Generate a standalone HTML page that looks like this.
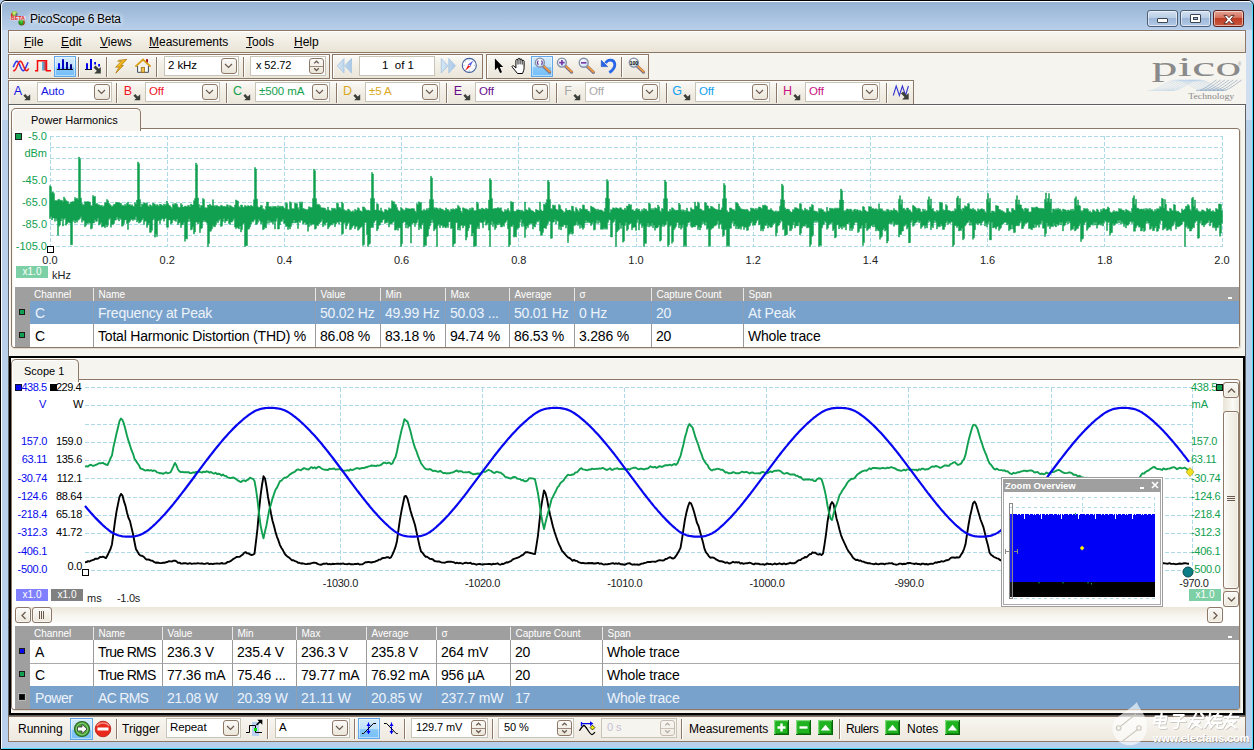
<!DOCTYPE html>
<html><head><meta charset="utf-8"><title>PicoScope 6 Beta</title>
<style>
html,body{margin:0;padding:0;}
body{width:1254px;height:750px;overflow:hidden;position:relative;background:#b9d1ea;font-family:"Liberation Sans",sans-serif;font-size:12px;}
div,span.t,svg{position:absolute;box-sizing:border-box;}
span.t{white-space:nowrap;display:block;}
u{text-decoration:underline;text-underline-offset:1px;}
.cb{background:#fff;border:1px solid #c9c4b8;}
.btn{border:1px solid #8d7767;border-radius:3px;background:linear-gradient(#fbfaf7,#ebe6da);}
.sep{width:1px;background:#8d7767;border-right:1px solid #fff;box-sizing:content-box;}
.hl{border:1px solid #62a8e8;background:linear-gradient(#d4ebfc 0%,#bfe1fb 52%,#86c8f9 56%,#76bff7 100%);box-shadow:inset 0 0 0 1px rgba(255,255,255,.45);}
</style></head><body>
<div style="left:0px;top:0px;width:1254px;height:750px;background:#b4cdea;"></div>
<div style="left:0px;top:0px;width:1254px;height:750px;background:linear-gradient(#98b4d4 2px,#a3bedc 12px,#b9d0eb 30px,#b9d0ec 100%);border:1px solid #000;border-radius:6px 6px 0 0;"></div>
<div style="left:1px;top:1px;width:1252px;height:748px;border:1px solid #fff;border-right-color:#48dcff;border-bottom-color:#48dcff;border-radius:5px 5px 0 0;"></div>
<div style="left:2px;top:30px;width:6px;height:90px;background:rgba(255,255,255,.32);"></div>
<div style="left:1246px;top:30px;width:6px;height:90px;background:rgba(255,255,255,.32);"></div>
<svg style="left:9px;top:9px" width="19" height="19" viewBox="9 9 19 19">
<defs><radialGradient id="b1" cx=".5" cy=".35" r=".7"><stop offset="0" stop-color="#e8f8a0"/><stop offset=".5" stop-color="#8ccc40"/><stop offset="1" stop-color="#c03828"/></radialGradient>
<radialGradient id="b2" cx=".45" cy=".4" r=".7"><stop offset="0" stop-color="#50d840"/><stop offset=".55" stop-color="#189818"/><stop offset="1" stop-color="#983020"/></radialGradient></defs>
<circle cx="14.400" cy="14" r="3" fill="url(#b1)"/><circle cx="16.600" cy="14.500" r="1.200" fill="#4858c0" opacity=".7"/>
<path d="M12 16.500a3 3 0 0 1 0-3" stroke="#d83020" stroke-width="1.400" fill="none"/>
<circle cx="21.600" cy="22.300" r="3.200" fill="url(#b2)"/><path d="M23 19.600a3.200 3.200 0 0 1 0 5.400z" fill="#c84820" opacity=".8"/>
<rect x="10.200" y="16" width="15.600" height="4.400" fill="#f4e4e4" opacity=".8"/>
<text x="10.800" y="20" font-size="5" font-weight="bold" fill="#e02828" font-family="Liberation Sans" textLength="14.200" lengthAdjust="spacingAndGlyphs">BETA</text>
</svg>
<span class="t" style="left:30px;top:12px;font-size:12px;line-height:14px;color:#000;letter-spacing:-.3px;text-shadow:0 0 6px #fff,0 0 4px #fff;">PicoScope 6 Beta</span>
<div style="left:1147px;top:10px;width:31px;height:17px;background:linear-gradient(#d3e1f2 0%,#b9cde6 45%,#9db7d8 50%,#b3cae6 100%);border:1px solid #4c5e75;border-radius:3px;box-shadow:inset 0 0 0 1px rgba(255,255,255,.55);"></div>
<div style="left:1180px;top:10px;width:31px;height:17px;background:linear-gradient(#d3e1f2 0%,#b9cde6 45%,#9db7d8 50%,#b3cae6 100%);border:1px solid #4c5e75;border-radius:3px;box-shadow:inset 0 0 0 1px rgba(255,255,255,.55);"></div>
<div style="left:1213px;top:10px;width:31px;height:17px;background:linear-gradient(#e6a495 0%,#d4705c 45%,#c03d26 50%,#c8583f 100%);border:1px solid #5b1f18;border-radius:3px;box-shadow:inset 0 0 0 1px rgba(255,255,255,.55);"></div>
<div style="left:1157px;top:18px;width:11px;height:5px;background:#fff;border:1px solid #3c4650;border-radius:1px;"></div>
<div style="left:1190px;top:14px;width:11px;height:9px;background:#fff;border:1px solid #3c4650;border-radius:1px;"></div>
<div style="left:1193px;top:17px;width:5px;height:3px;background:#9fb9da;border:1px solid #3c4650;"></div>
<svg style="left:1220.500px;top:13.500px" width="16" height="11" viewBox="0 0 16 12">
<path d="M2.5 1.5h3.2L8 4l2.3-2.5h3.2L9.9 6l3.6 4.5h-3.2L8 8l-2.3 2.5H2.5L6.1 6z" fill="#fff" stroke="#4a2a25" stroke-width="1"/></svg>
<div style="left:8px;top:30px;width:1238px;height:712px;background:#f6f4ef;"></div>
<div style="left:8px;top:30px;width:1238px;height:23px;background:linear-gradient(#f9f7f2,#f1ede3 50%,#e9e3d5);box-shadow:inset 1px 1px 0 #fff;border:1px solid #8d7767;"></div>
<span class="t" style="left:24px;top:35px;font-size:12px;line-height:14px;color:#000;"><u>F</u>ile</span>
<span class="t" style="left:61px;top:35px;font-size:12px;line-height:14px;color:#000;"><u>E</u>dit</span>
<span class="t" style="left:100px;top:35px;font-size:12px;line-height:14px;color:#000;"><u>V</u>iews</span>
<span class="t" style="left:149px;top:35px;font-size:12px;line-height:14px;color:#000;"><u>M</u>easurements</span>
<span class="t" style="left:246px;top:35px;font-size:12px;line-height:14px;color:#000;"><u>T</u>ools</span>
<span class="t" style="left:294px;top:35px;font-size:12px;line-height:14px;color:#000;"><u>H</u>elp</span>
<div style="left:8px;top:54px;width:322px;height:25px;background:linear-gradient(#fbfaf7,#f3f0e8 40%,#ebe6da);border:1px solid #8d7767;box-shadow:inset 1px 1px 0 #fff;"></div>
<div class="hl" style="left:54px;top:56px;width:22px;height:21px;"></div>
<svg style="left:0;top:50px" width="170" height="30" viewBox="0 50 170 30">
<defs><linearGradient id="sq"><stop offset="0" stop-color="#48c8fa"/><stop offset="1" stop-color="#f01818"/></linearGradient>
<linearGradient id="bar"><stop offset="0" stop-color="#0000f0"/><stop offset="1" stop-color="#000078"/></linearGradient>
<linearGradient id="bolt" x1="0" y1="0" x2="1" y2="1"><stop offset="0" stop-color="#fff0a0"/><stop offset=".4" stop-color="#f2b818"/><stop offset="1" stop-color="#b87808"/></linearGradient></defs>
<path d="M13.2 67.2 13.7 66.1 14.2 64.9 14.7 63.8 15.2 62.8 15.7 62.1 16.2 61.5 16.7 61.3 17.2 61.3 17.7 61.6 18.2 62.2 18.7 63.0 19.2 64.0 19.7 65.1 20.2 66.3 20.7 67.4 21.2 68.5 21.7 69.4 22.2 70.1 22.7 70.6 23.2 70.7 23.7 70.6 24.2 70.2 24.7 69.6 25.2 68.7 25.7 67.7 26.2 66.5 26.7 65.4 27.2 64.2 27.7 63.2 28.2 62.3" fill="none" stroke="#2a38f0" stroke-width="1.500"/>
<path d="M13.2 70.4 13.7 70.7 14.2 70.7 14.7 70.4 15.2 69.9 15.7 69.1 16.2 68.1 16.7 67.0 17.2 65.8 17.7 64.7 18.2 63.6 18.7 62.7 19.2 61.9 19.7 61.5 20.2 61.3 20.7 61.3 21.2 61.7 21.7 62.3 22.2 63.2 22.7 64.2 23.2 65.4 23.7 66.5 24.2 67.7 24.7 68.7 25.2 69.6 25.7 70.2 26.2 70.6 26.7 70.7 27.2 70.6 27.7 70.1 28.2 69.4 28.7 68.5" fill="none" stroke="#f01818" stroke-width="1.500"/>
<rect x="42" y="61.500" width="4.500" height="9" fill="url(#sq)"/>
<path d="M35 70.700H37.500V60.700H46.500V70.700H51" fill="none" stroke="#f40808" stroke-width="1.500"/>
<path d="M58 69V63.200h2V69zM62 69V59.200h2V69zM66 69V62h2V69zM70 69V64.200h2V69z" fill="url(#bar)"/>
<path d="M57 69.500H73" stroke="#101010" stroke-width="1"/>
<path d="M86 69V63.300h2V69zM90 69V59.100h2V69zM94.200 64.500V62h1.800v2.500zM98.200 66.400V64h1.800v2.400z" fill="#0000f0"/>
<path d="M85 69.500H92" stroke="#101030" stroke-width="1"/>
<path d="M94.500 66.500l4 4" stroke="#3a3f3a" stroke-width="3"/><path d="M100.800 67v6.600h-6.600z" fill="#3a3f3a"/>
<path d="M118.500 60.300l8.300-.9-6 6.300 2.600-.3-7.600 7.800 3.400-6.300-3.600.4 5.800-6.300-3.600.4z" fill="url(#bolt)" stroke="#a87008" stroke-width=".7"/>
<rect x="146" y="59.200" width="2" height="3.600" fill="#a01020"/>
<path d="M137.600 66v6.300h10.800V66" fill="#f8fcfc" stroke="#3c4858" stroke-width="1"/>
<path d="M135.400 66.600L143 59.600l7.600 7" fill="none" stroke="#d8a018" stroke-width="1.900"/>
<rect x="141.200" y="67.300" width="3.300" height="5" fill="#f0c050" stroke="#9a6c10" stroke-width=".8"/>
</svg>
<div class="sep" style="left:78px;top:57px;width:1px;height:20px;"></div>
<div class="sep" style="left:106px;top:57px;width:1px;height:20px;"></div>
<div class="sep" style="left:156px;top:57px;width:1px;height:20px;"></div>
<div class="cb" style="left:164px;top:56px;width:75px;height:20px;"></div>
<span class="t" style="left:168px;top:59.25px;font-size:11.5px;line-height:13.5px;color:#000;letter-spacing:-.1px;">2 kHz</span>
<div class="btn" style="left:221px;top:58px;width:16px;height:16px;"><svg style="left:2px;top:4px" width="9" height="6" viewBox="0 0 9 6"><path d="M1 1l3.5 3.5L8 1" fill="none" stroke="#6a594e" stroke-width="1.15"/></svg></div>
<div class="sep" style="left:243px;top:57px;width:1px;height:20px;"></div>
<div class="cb" style="left:250px;top:56px;width:76px;height:20px;"></div>
<span class="t" style="left:256px;top:59.3px;font-size:11px;line-height:13px;color:#000;letter-spacing:-.1px;">x 52.72</span>
<div class="btn" style="left:309px;top:58px;width:15px;height:16px;"><svg style="left:3px;top:0px" width="7" height="14" viewBox="0 0 7 14"><path d="M1.200 4.400L3.500 2.200 5.800 4.400M1.200 9.300L3.500 11.500 5.800 9.300" fill="none" stroke="#6a594e" stroke-width="1.300"/></svg><div style="left:0;top:7px;width:13px;height:1px;background:#9d8a7c"></div></div>
<div style="left:332px;top:54px;width:151px;height:25px;background:linear-gradient(#fbfaf7,#f3f0e8 40%,#ebe6da);border:1px solid #8d7767;box-shadow:inset 1px 1px 0 #fff;"></div>
<svg style="left:332px;top:54px" width="152" height="25" viewBox="332 54 152 25">
<defs><linearGradient id="nv" x1="0" y1="0" x2="1" y2="0"><stop offset="0" stop-color="#d4e6f2"/><stop offset="1" stop-color="#a8c8e6"/></linearGradient></defs>
<path d="M344 58.500v14.500L337.300 65.800zM351.500 58.500v14.500L344.800 65.800z" fill="url(#nv)" stroke="#a4c4e2" stroke-width=".8"/>
<path d="M441.300 58.500v14.500L448 65.800zM448.800 58.500v14.500L455.500 65.800z" fill="url(#nv)" stroke="#a4c4e2" stroke-width=".8"/>
<circle cx="469.300" cy="65.400" r="7" fill="#fdfeff" stroke="#3f5f9c" stroke-width="1.100"/>
<path d="M469.300 59.500v1.300M469.300 70v1.300M463.400 65.400h1.300M473.900 65.400h1.300M465.200 61.300l.8.800M473.400 61.300l-.8.800M465.200 69.500l.8-.8M473.400 69.500l-.8-.8" stroke="#9aa8c0" stroke-width=".7"/>
<path d="M473.300 60.500L468 64.600l2.200 1.800z" fill="#5a5ae8"/><path d="M465.200 70.800L470.700 66.300l-2.300-1.800z" fill="#f01818"/>
<circle cx="469.300" cy="65.500" r=".8" fill="#fff"/>
</svg>
<div class="cb" style="left:359px;top:56px;width:76px;height:20px;"></div>
<span class="t" style="left:382px;top:59.3px;font-size:11.5px;line-height:13.5px;color:#000;">1&nbsp;&nbsp;of 1</span>
<div style="left:486px;top:54px;width:163px;height:25px;background:linear-gradient(#fbfaf7,#f3f0e8 40%,#ebe6da);border:1px solid #8d7767;box-shadow:inset 1px 1px 0 #fff;"></div>
<div class="hl" style="left:531px;top:56px;width:22px;height:21px;"></div>
<svg style="left:486px;top:50px" width="170" height="30" viewBox="486 50 170 30">
<defs><radialGradient id="gl" cx=".4" cy=".35" r=".7"><stop offset="0" stop-color="#ffffff"/><stop offset="1" stop-color="#c4e0f4"/></radialGradient></defs>
<path d="M494.900 58.500V70.200L497.600 67.600 500 73 502 72.200 499.800 67H503.200Z" fill="#000" stroke="#fff" stroke-width=".6" paint-order="stroke"/>
<path d="M517.500 73.500c-1.500-2-3.500-4.300-5.200-6.200-.8-1 .5-2.200 1.600-1.200l2 1.900V60.500c0-1.400 2-1.400 2 0V59.400c0-1.500 2.100-1.500 2.100 0v.6c0-1.400 2.100-1.400 2.100 0v1.300c0-1.300 2-1.300 2 0v6.200c0 2.500-.8 4-1.600 6z" fill="#fff" stroke="#000" stroke-width="1"/>
<path d="M518 60.500v4M520.100 60v4.300M522.200 61.300v3.300" stroke="#000" stroke-width=".9"/>
<path d="M543.3 66.2l6.300 5.900" stroke="#78708c" stroke-width="3.200" stroke-linecap="round"/><path d="M544.1 66.4l5.600 5.200" stroke="#f49a38" stroke-width="1.800" stroke-linecap="round"/><circle cx="539.9" cy="62.6" r="4.500" fill="url(#gl)" stroke="#8890a6" stroke-width="1.400"/><path d="M538.300 60.500c-1 1.300-1 3 0 4.300M541.500 60.500c1 1.300 1 3 0 4.300" stroke="#6a3a9a" stroke-width="1.100" fill="none"/><path d="M565.3 66.2l6.300 5.900" stroke="#78708c" stroke-width="3.200" stroke-linecap="round"/><path d="M566.1 66.4l5.600 5.200" stroke="#f49a38" stroke-width="1.800" stroke-linecap="round"/><circle cx="561.9" cy="62.6" r="4.500" fill="url(#gl)" stroke="#8890a6" stroke-width="1.400"/><path d="M559.200 62.600h5.400M561.900 59.900v5.400" stroke="#7838a8" stroke-width="1.700"/><path d="M587.1 66.39999999999999l6.300 5.900" stroke="#78708c" stroke-width="3.200" stroke-linecap="round"/><path d="M587.9000000000001 66.6l5.600 5.200" stroke="#f49a38" stroke-width="1.800" stroke-linecap="round"/><circle cx="583.7" cy="62.8" r="4.500" fill="url(#gl)" stroke="#8890a6" stroke-width="1.400"/><path d="M581 62.800h5.400" stroke="#7838a8" stroke-width="1.700"/><path d="M637.1999999999999 66.2l6.300 5.900" stroke="#78708c" stroke-width="3.200" stroke-linecap="round"/><path d="M638.0 66.4l5.600 5.200" stroke="#f49a38" stroke-width="1.800" stroke-linecap="round"/><circle cx="633.8" cy="62.6" r="4.500" fill="url(#gl)" stroke="#8890a6" stroke-width="1.400"/><text x="629.700" y="65" font-size="6" font-weight="bold" font-family="Liberation Sans" fill="#000" textLength="8.400" lengthAdjust="spacingAndGlyphs">100</text>
<path d="M601.300 60.300v6.300h6.300z" fill="#2868e8" stroke="#1848c0" stroke-width=".6"/>
<path d="M605.500 63.200C608 58.500 614.600 59.300 614.800 64.500 614.900 68 612.500 70.500 609.300 72.500" fill="none" stroke="#2868e8" stroke-width="2.800" stroke-linecap="butt"/>
</svg>
<div class="sep" style="left:621px;top:57px;width:1px;height:20px;"></div>
<div style="left:8px;top:80px;width:906px;height:25px;background:linear-gradient(#fbfaf7,#f3f0e8 40%,#ebe6da);border:1px solid #8d7767;box-shadow:inset 1px 1px 0 #fff;"></div>
<span class="t" style="left:-18px;top:84px;font-size:12.5px;line-height:14.5px;color:#1414e6;width:40px;text-align:right;">A</span>
<svg style="left:23px;top:93px" width="8" height="8" viewBox="0 0 8 8"><path d="M1.300 1.800l3.500 3.500" stroke="#3a3f3a" stroke-width="2.600"/><path d="M7.200 1.200v6h-6z" fill="#3a3f3a"/></svg>
<div class="cb" style="left:37px;top:82px;width:75px;height:20px;"></div>
<span class="t" style="left:41px;top:85.25px;font-size:11.5px;line-height:13.5px;color:#1414e6;letter-spacing:-.1px;">Auto</span>
<div class="btn" style="left:94px;top:84px;width:16px;height:16px;"><svg style="left:2px;top:4px" width="9" height="6" viewBox="0 0 9 6"><path d="M1 1l3.5 3.5L8 1" fill="none" stroke="#6a594e" stroke-width="1.15"/></svg></div>
<div class="sep" style="left:116px;top:83px;width:1px;height:20px;"></div>
<span class="t" style="left:92px;top:84px;font-size:12.5px;line-height:14.5px;color:#f01428;width:40px;text-align:right;">B</span>
<svg style="left:133px;top:93px" width="8" height="8" viewBox="0 0 8 8"><path d="M1.300 1.800l3.500 3.500" stroke="#3a3f3a" stroke-width="2.600"/><path d="M7.200 1.200v6h-6z" fill="#3a3f3a"/></svg>
<div class="cb" style="left:145px;top:82px;width:75px;height:20px;"></div>
<span class="t" style="left:149px;top:85.25px;font-size:11.5px;line-height:13.5px;color:#f01428;letter-spacing:-.1px;">Off</span>
<div class="btn" style="left:202px;top:84px;width:16px;height:16px;"><svg style="left:2px;top:4px" width="9" height="6" viewBox="0 0 9 6"><path d="M1 1l3.5 3.5L8 1" fill="none" stroke="#6a594e" stroke-width="1.15"/></svg></div>
<div class="sep" style="left:226px;top:83px;width:1px;height:20px;"></div>
<span class="t" style="left:202px;top:84px;font-size:12.5px;line-height:14.5px;color:#14a050;width:40px;text-align:right;">C</span>
<svg style="left:243px;top:93px" width="8" height="8" viewBox="0 0 8 8"><path d="M1.300 1.800l3.500 3.500" stroke="#3a3f3a" stroke-width="2.600"/><path d="M7.200 1.200v6h-6z" fill="#3a3f3a"/></svg>
<div class="cb" style="left:255px;top:82px;width:75px;height:20px;"></div>
<span class="t" style="left:259px;top:85.25px;font-size:11.5px;line-height:13.5px;color:#14a050;letter-spacing:-.1px;">&#177;500 mA</span>
<div class="btn" style="left:312px;top:84px;width:16px;height:16px;"><svg style="left:2px;top:4px" width="9" height="6" viewBox="0 0 9 6"><path d="M1 1l3.5 3.5L8 1" fill="none" stroke="#6a594e" stroke-width="1.15"/></svg></div>
<div class="sep" style="left:336px;top:83px;width:1px;height:20px;"></div>
<span class="t" style="left:312px;top:84px;font-size:12.5px;line-height:14.5px;color:#d8a81e;width:40px;text-align:right;">D</span>
<svg style="left:353px;top:93px" width="8" height="8" viewBox="0 0 8 8"><path d="M1.300 1.800l3.500 3.500" stroke="#3a3f3a" stroke-width="2.600"/><path d="M7.200 1.200v6h-6z" fill="#3a3f3a"/></svg>
<div class="cb" style="left:365px;top:82px;width:75px;height:20px;"></div>
<span class="t" style="left:369px;top:85.25px;font-size:11.5px;line-height:13.5px;color:#d8a81e;letter-spacing:-.1px;">&#177;5 A</span>
<div class="btn" style="left:422px;top:84px;width:16px;height:16px;"><svg style="left:2px;top:4px" width="9" height="6" viewBox="0 0 9 6"><path d="M1 1l3.5 3.5L8 1" fill="none" stroke="#6a594e" stroke-width="1.15"/></svg></div>
<div class="sep" style="left:446px;top:83px;width:1px;height:20px;"></div>
<span class="t" style="left:422px;top:84px;font-size:12.5px;line-height:14.5px;color:#6a0e8c;width:40px;text-align:right;">E</span>
<svg style="left:463px;top:93px" width="8" height="8" viewBox="0 0 8 8"><path d="M1.300 1.800l3.500 3.500" stroke="#3a3f3a" stroke-width="2.600"/><path d="M7.200 1.200v6h-6z" fill="#3a3f3a"/></svg>
<div class="cb" style="left:475px;top:82px;width:75px;height:20px;"></div>
<span class="t" style="left:479px;top:85.25px;font-size:11.5px;line-height:13.5px;color:#6a0e8c;letter-spacing:-.1px;">Off</span>
<div class="btn" style="left:532px;top:84px;width:16px;height:16px;"><svg style="left:2px;top:4px" width="9" height="6" viewBox="0 0 9 6"><path d="M1 1l3.5 3.5L8 1" fill="none" stroke="#6a594e" stroke-width="1.15"/></svg></div>
<div class="sep" style="left:556px;top:83px;width:1px;height:20px;"></div>
<span class="t" style="left:532px;top:84px;font-size:12.5px;line-height:14.5px;color:#a8a8a8;width:40px;text-align:right;">F</span>
<svg style="left:573px;top:93px" width="8" height="8" viewBox="0 0 8 8"><path d="M1.300 1.800l3.500 3.500" stroke="#3a3f3a" stroke-width="2.600"/><path d="M7.200 1.200v6h-6z" fill="#3a3f3a"/></svg>
<div class="cb" style="left:585px;top:82px;width:75px;height:20px;"></div>
<span class="t" style="left:589px;top:85.25px;font-size:11.5px;line-height:13.5px;color:#a8a8a8;letter-spacing:-.1px;">Off</span>
<div class="btn" style="left:642px;top:84px;width:16px;height:16px;"><svg style="left:2px;top:4px" width="9" height="6" viewBox="0 0 9 6"><path d="M1 1l3.5 3.5L8 1" fill="none" stroke="#6a594e" stroke-width="1.15"/></svg></div>
<div class="sep" style="left:666px;top:83px;width:1px;height:20px;"></div>
<span class="t" style="left:642px;top:84px;font-size:12.5px;line-height:14.5px;color:#14a0f0;width:40px;text-align:right;">G</span>
<svg style="left:683px;top:93px" width="8" height="8" viewBox="0 0 8 8"><path d="M1.300 1.800l3.500 3.500" stroke="#3a3f3a" stroke-width="2.600"/><path d="M7.200 1.200v6h-6z" fill="#3a3f3a"/></svg>
<div class="cb" style="left:695px;top:82px;width:75px;height:20px;"></div>
<span class="t" style="left:699px;top:85.25px;font-size:11.5px;line-height:13.5px;color:#14a0f0;letter-spacing:-.1px;">Off</span>
<div class="btn" style="left:752px;top:84px;width:16px;height:16px;"><svg style="left:2px;top:4px" width="9" height="6" viewBox="0 0 9 6"><path d="M1 1l3.5 3.5L8 1" fill="none" stroke="#6a594e" stroke-width="1.15"/></svg></div>
<div class="sep" style="left:776px;top:83px;width:1px;height:20px;"></div>
<span class="t" style="left:752px;top:84px;font-size:12.5px;line-height:14.5px;color:#c8147e;width:40px;text-align:right;">H</span>
<svg style="left:793px;top:93px" width="8" height="8" viewBox="0 0 8 8"><path d="M1.300 1.800l3.500 3.500" stroke="#3a3f3a" stroke-width="2.600"/><path d="M7.200 1.200v6h-6z" fill="#3a3f3a"/></svg>
<div class="cb" style="left:805px;top:82px;width:75px;height:20px;"></div>
<span class="t" style="left:809px;top:85.25px;font-size:11.5px;line-height:13.5px;color:#c8147e;letter-spacing:-.1px;">Off</span>
<div class="btn" style="left:862px;top:84px;width:16px;height:16px;"><svg style="left:2px;top:4px" width="9" height="6" viewBox="0 0 9 6"><path d="M1 1l3.5 3.5L8 1" fill="none" stroke="#6a594e" stroke-width="1.15"/></svg></div>
<div class="sep" style="left:886px;top:83px;width:1px;height:20px;"></div>
<svg style="left:890px;top:82px" width="24" height="22" viewBox="890 82 24 22">
<path d="M893.300 95.500L896.200 86l3.200 9.500 3-9.500 3.200 9.500 2.800-9.500" fill="none" stroke="#3434d0" stroke-width="1.100"/>
<path d="M902 92.500l4 4" stroke="#3a3f3a" stroke-width="2.800"/><path d="M908.700 93v6.600h-6.600z" fill="#3a3f3a"/></svg>
<svg style="left:1140px;top:52px" width="106" height="52" viewBox="1140 52 106 52">
<text x="1151.400" y="76.100" font-family="Liberation Serif" font-size="27.500" fill="#8a8a8a" textLength="90" lengthAdjust="spacingAndGlyphs">pico</text>
<text x="1238" y="66" font-family="Liberation Sans" font-size="4.500" fill="#9a9a9a">&#174;</text>
<g fill="none" stroke-width=".55"><path d="M1148.0 90.600C1160.0 90.600 1165.0 80 1176.0 80S1192.0 90.600 1204.0 90.600" stroke="#a9c9e6" opacity="0.55"/><path d="M1151.3 90.600C1163.3 90.600 1168.3 80 1179.3 80S1195.3 90.600 1207.3 90.600" stroke="#a9c9e6" opacity="0.60"/><path d="M1154.6 90.600C1166.6 90.600 1171.6 80 1182.6 80S1198.6 90.600 1210.6 90.600" stroke="#a9c9e6" opacity="0.65"/><path d="M1157.9 90.600C1169.9 90.600 1174.9 80 1185.9 80S1201.9 90.600 1213.9 90.600" stroke="#a9c9e6" opacity="0.70"/><path d="M1161.2 90.600C1173.2 90.600 1178.2 80 1189.2 80S1205.2 90.600 1217.2 90.600" stroke="#a9c9e6" opacity="0.75"/><path d="M1164.5 90.600C1176.5 90.600 1181.5 80 1192.5 80S1208.5 90.600 1220.5 90.600" stroke="#a9c9e6" opacity="0.80"/><path d="M1167.8 90.600C1179.8 90.600 1184.8 80 1195.8 80S1211.8 90.600 1223.8 90.600" stroke="#a9c9e6" opacity="0.85"/><path d="M1171.1 90.600C1183.1 90.600 1188.1 80 1199.1 80S1215.1 90.600 1227.1 90.600" stroke="#a9c9e6" opacity="0.90"/><path d="M1196.0 90.600C1204.0 90.600 1210.0 84 1216.5 80" stroke="#5f7fa2" opacity=".85"/><path d="M1200.2 90.600C1208.2 90.600 1214.2 84 1220.7 80" stroke="#5f7fa2" opacity=".85"/><path d="M1204.4 90.600C1212.4 90.600 1218.4 84 1224.9 80" stroke="#5f7fa2" opacity=".85"/><path d="M1208.6 90.600C1216.6 90.600 1222.6 84 1229.1 80" stroke="#5f7fa2" opacity=".85"/><path d="M1212.8 90.600C1220.8 90.600 1226.8 84 1233.3 80" stroke="#5f7fa2" opacity=".85"/><path d="M1217.0 90.600C1225.0 90.600 1231.0 84 1237.5 80" stroke="#5f7fa2" opacity=".85"/><path d="M1221.2 90.600C1229.2 90.600 1235.2 84 1241.7 80" stroke="#5f7fa2" opacity=".85"/></g>
<text x="1188.200" y="98.500" font-family="Liberation Serif" font-size="8" fill="#8a8a8a" textLength="46" lengthAdjust="spacingAndGlyphs">Technology</text>
</svg>
<div style="left:8px;top:104px;width:1238px;height:612px;border:1px solid #5f5f5f;box-shadow:inset 1px 1px 0 #fff;"></div>
<div style="left:11px;top:128px;width:1229px;height:220px;background:#fff;border:1px solid #8d7767;border-radius:0 3px 3px 3px;box-shadow:1px 1px 0 #dedbd0,inset 2px 0 1px -1px #f6f4ef;"></div>
<div style="left:11px;top:108px;width:130px;height:23px;background:#f6f4ef;border:1px solid #8d7767;border-bottom:none;border-radius:5px 5px 0 0;box-shadow:inset 1px 1px 0 #fff;"></div>
<span class="t" style="left:31px;top:113.5px;font-size:11px;line-height:13px;color:#000;">Power Harmonics</span>
<svg style="left:0;top:0" width="1254" height="290" viewBox="0 0 1254 290">
<path d="M50 136.0H1222M50 147.1H1222M50 158.1H1222M50 169.2H1222M50 180.2H1222M50 191.2H1222M50 202.3H1222M50 213.3H1222M50 224.4H1222M50 235.4H1222M50 246.5H1222M50.0 136V246.5M167.2 136V246.5M284.4 136V246.5M401.6 136V246.5M518.8 136V246.5M636.0 136V246.5M753.2 136V246.5M870.4 136V246.5M987.6 136V246.5M1104.8 136V246.5M1222.0 136V246.5" fill="none" stroke="#aed9e8" stroke-width="1" stroke-dasharray="4 2" shape-rendering="crispEdges"/>
<path d="M49.5 185.7H50.5L50.5 186.8H51.5L51.5 192.4H52.5L52.5 192.0H53.5L53.5 193.5H54.5L54.5 200.4H55.5L55.5 200.5H56.5L56.5 200.9H57.5L57.5 199.7H58.5L58.5 199.2H59.5L59.5 200.3H60.5L60.5 200.2H61.5L61.5 200.5H62.5L62.5 201.4H63.5L63.5 197.1H64.5L64.5 198.7H65.5L65.5 200.6H66.5L66.5 201.2H67.5L67.5 201.5H68.5L68.5 204.1H69.5L69.5 203.7H70.5L70.5 201.9H71.5L71.5 202.1H72.5L72.5 201.4H73.5L73.5 201.6H74.5L74.5 197.5H75.5L75.5 199.1H76.5L76.5 198.1H77.5L77.5 199.5H78.5L78.5 157.0H79.5L79.5 158.7H80.5L80.5 198.1H81.5L81.5 203.6H82.5L82.5 205.2H83.5L83.5 204.5H84.5L84.5 201.6H85.5L85.5 201.9H86.5L86.5 201.7H87.5L87.5 201.5H88.5L88.5 201.9H89.5L89.5 202.1H90.5L90.5 205.4H91.5L91.5 206.0H92.5L92.5 195.5H93.5L93.5 196.4H94.5L94.5 196.4H95.5L95.5 204.1H96.5L96.5 203.4H97.5L97.5 204.7H98.5L98.5 204.7H99.5L99.5 205.5H100.5L100.5 205.6H101.5L101.5 205.4H102.5L102.5 207.0H103.5L103.5 205.8H104.5L104.5 202.8H105.5L105.5 202.8H106.5L106.5 199.5H107.5L107.5 200.7H108.5L108.5 203.3H109.5L109.5 204.5H110.5L110.5 205.6H111.5L111.5 207.1H112.5L112.5 205.8H113.5L113.5 204.3H114.5L114.5 204.3H115.5L115.5 202.3H116.5L116.5 202.6H117.5L117.5 202.4H118.5L118.5 202.8H119.5L119.5 203.0H120.5L120.5 203.4H121.5L121.5 205.2H122.5L122.5 205.4H123.5L123.5 206.0H124.5L124.5 204.3H125.5L125.5 205.4H126.5L126.5 203.2H127.5L127.5 202.2H128.5L128.5 205.1H129.5L129.5 204.4H130.5L130.5 205.8H131.5L131.5 204.8H132.5L132.5 206.0H133.5L133.5 206.7H134.5L134.5 202.7H135.5L135.5 204.0H136.5L136.5 200.1H137.5L137.5 162.0H138.5L138.5 163.6H139.5L139.5 199.5H140.5L140.5 207.0H141.5L141.5 203.9H142.5L142.5 204.5H143.5L143.5 202.7H144.5L144.5 202.9H145.5L145.5 204.1H146.5L146.5 202.9H147.5L147.5 205.8H148.5L148.5 206.5H149.5L149.5 204.7H150.5L150.5 205.4H151.5L151.5 206.3H152.5L152.5 203.1H153.5L153.5 203.8H154.5L154.5 204.2H155.5L155.5 205.8H156.5L156.5 204.6H157.5L157.5 205.2H158.5L158.5 206.3H159.5L159.5 204.1H160.5L160.5 204.6H161.5L161.5 205.3H162.5L162.5 206.0H163.5L163.5 204.0H164.5L164.5 205.5H165.5L165.5 204.2H166.5L166.5 201.1H167.5L167.5 203.4H168.5L168.5 205.3H169.5L169.5 205.7H170.5L170.5 207.0H171.5L171.5 208.6H172.5L172.5 203.8H173.5L173.5 204.9H174.5L174.5 203.6H175.5L175.5 203.5H176.5L176.5 204.3H177.5L177.5 206.8H178.5L178.5 208.0H179.5L179.5 207.3H180.5L180.5 203.6H181.5L181.5 204.8H182.5L182.5 207.0H183.5L183.5 207.0H184.5L184.5 206.0H185.5L185.5 206.2H186.5L186.5 206.9H187.5L187.5 205.4H188.5L188.5 205.5H189.5L189.5 206.9H190.5L190.5 203.9H191.5L191.5 205.1H192.5L192.5 205.1H193.5L193.5 200.7H194.5L194.5 198.5H195.5L195.5 163.1H196.5L196.5 164.7H197.5L197.5 197.9H198.5L198.5 204.5H199.5L199.5 207.8H200.5L200.5 205.4H201.5L201.5 205.8H202.5L202.5 198.5H203.5L203.5 199.5H204.5L204.5 207.4H205.5L205.5 208.2H206.5L206.5 207.7H207.5L207.5 205.1H208.5L208.5 205.3H209.5L209.5 204.2H210.5L210.5 205.6H211.5L211.5 205.7H212.5L212.5 199.7H213.5L213.5 205.6H214.5L214.5 206.3H215.5L215.5 205.5H216.5L216.5 205.6H217.5L217.5 206.2H218.5L218.5 206.6H219.5L219.5 206.8H220.5L220.5 205.2H221.5L221.5 205.8H222.5L222.5 206.3H223.5L223.5 206.6H224.5L224.5 206.3H225.5L225.5 207.0H226.5L226.5 204.7H227.5L227.5 205.2H228.5L228.5 207.3H229.5L229.5 205.3H230.5L230.5 205.9H231.5L231.5 206.8H232.5L232.5 207.2H233.5L233.5 207.5H234.5L234.5 205.0H235.5L235.5 199.9H236.5L236.5 200.7H237.5L237.5 201.2H238.5L238.5 206.5H239.5L239.5 207.6H240.5L240.5 205.0H241.5L241.5 205.1H242.5L242.5 207.0H243.5L243.5 207.2H244.5L244.5 205.4H245.5L245.5 205.9H246.5L246.5 206.8H247.5L247.5 205.6H248.5L248.5 206.1H249.5L249.5 206.4H250.5L250.5 205.2H251.5L251.5 206.1H252.5L252.5 206.4H253.5L253.5 199.7H254.5L254.5 167.5H255.5L255.5 169.2H256.5L256.5 199.1H257.5L257.5 206.8H258.5L258.5 207.9H259.5L259.5 207.0H260.5L260.5 205.3H261.5L261.5 205.7H262.5L262.5 208.7H263.5L263.5 209.2H264.5L264.5 210.2H265.5L265.5 206.3H266.5L266.5 202.0H267.5L267.5 202.2H268.5L268.5 206.6H269.5L269.5 206.7H270.5L270.5 206.6H271.5L271.5 208.1H272.5L272.5 206.2H273.5L273.5 207.0H274.5L274.5 206.3H275.5L275.5 206.6H276.5L276.5 207.7H277.5L277.5 205.7H278.5L278.5 207.3H279.5L279.5 206.0H280.5L280.5 207.3H281.5L281.5 206.1H282.5L282.5 206.6H283.5L283.5 207.8H284.5L284.5 209.1H285.5L285.5 202.7H286.5L286.5 203.6H287.5L287.5 209.2H288.5L288.5 210.0H289.5L289.5 201.8H290.5L290.5 202.7H291.5L291.5 208.8H292.5L292.5 208.6H293.5L293.5 208.9H294.5L294.5 202.8H295.5L295.5 203.9H296.5L296.5 203.5H297.5L297.5 207.6H298.5L298.5 209.4H299.5L299.5 201.9H300.5L300.5 203.2H301.5L301.5 201.9H302.5L302.5 208.3H303.5L303.5 208.7H304.5L304.5 209.3H305.5L305.5 209.3H306.5L306.5 210.3H307.5L307.5 209.2H308.5L308.5 206.7H309.5L309.5 207.2H310.5L310.5 207.8H311.5L311.5 207.3H312.5L312.5 198.6H313.5L313.5 169.2H314.5L314.5 170.8H315.5L315.5 198.6H316.5L316.5 204.4H317.5L317.5 204.3H318.5L318.5 204.5H319.5L319.5 205.6H320.5L320.5 207.5H321.5L321.5 208.0H322.5L322.5 207.8H323.5L323.5 208.1H324.5L324.5 208.2H325.5L325.5 209.8H326.5L326.5 210.6H327.5L327.5 207.1H328.5L328.5 209.9H329.5L329.5 210.6H330.5L330.5 211.3H331.5L331.5 208.1H332.5L332.5 208.9H333.5L333.5 208.2H334.5L334.5 208.4H335.5L335.5 209.8H336.5L336.5 202.8H337.5L337.5 203.6H338.5L338.5 207.3H339.5L339.5 207.5H340.5L340.5 208.8H341.5L341.5 202.0H342.5L342.5 203.5H343.5L343.5 209.5H344.5L344.5 210.5H345.5L345.5 210.5H346.5L346.5 211.3H347.5L347.5 209.1H348.5L348.5 209.4H349.5L349.5 210.7H350.5L350.5 212.0H351.5L351.5 211.6H352.5L352.5 210.8H353.5L353.5 212.3H354.5L354.5 209.3H355.5L355.5 210.9H356.5L356.5 209.9H357.5L357.5 207.7H358.5L358.5 208.6H359.5L359.5 210.7H360.5L360.5 211.0H361.5L361.5 211.7H362.5L362.5 206.9H363.5L363.5 207.0H364.5L364.5 208.4H365.5L365.5 209.8H366.5L366.5 210.7H367.5L367.5 210.0H368.5L368.5 210.6H369.5L369.5 210.7H370.5L370.5 198.4H371.5L371.5 172.5H372.5L372.5 174.1H373.5L373.5 198.4H374.5L374.5 210.0H375.5L375.5 210.0H376.5L376.5 203.6H377.5L377.5 204.4H378.5L378.5 210.3H379.5L379.5 211.0H380.5L380.5 207.9H381.5L381.5 210.8H382.5L382.5 211.9H383.5L383.5 212.3H384.5L384.5 209.4H385.5L385.5 209.4H386.5L386.5 210.3H387.5L387.5 210.6H388.5L388.5 207.8H389.5L389.5 208.9H390.5L390.5 208.6H391.5L391.5 200.8H392.5L392.5 202.1H393.5L393.5 201.7H394.5L394.5 204.3H395.5L395.5 204.6H396.5L396.5 207.5H397.5L397.5 209.9H398.5L398.5 211.0H399.5L399.5 211.2H400.5L400.5 207.4H401.5L401.5 208.5H402.5L402.5 209.4H403.5L403.5 210.4H404.5L404.5 209.9H405.5L405.5 207.9H406.5L406.5 208.4H407.5L407.5 208.7H408.5L408.5 208.8H409.5L409.5 208.9H410.5L410.5 209.0H411.5L411.5 208.5H412.5L412.5 208.6H413.5L413.5 208.8H414.5L414.5 210.9H415.5L415.5 212.2H416.5L416.5 203.6H417.5L417.5 204.7H418.5L418.5 201.8H419.5L419.5 202.5H420.5L420.5 202.4H421.5L421.5 210.6H422.5L422.5 211.0H423.5L423.5 209.2H424.5L424.5 210.7H425.5L425.5 210.1H426.5L426.5 208.6H427.5L427.5 210.0H428.5L428.5 208.0H429.5L429.5 199.5H430.5L430.5 176.3H431.5L431.5 178.0H432.5L432.5 199.5H433.5L433.5 207.5H434.5L434.5 208.7H435.5L435.5 207.8H436.5L436.5 208.0H437.5L437.5 208.8H438.5L438.5 209.8H439.5L439.5 207.9H440.5L440.5 209.0H441.5L441.5 209.0H442.5L442.5 209.7H443.5L443.5 210.5H444.5L444.5 210.8H445.5L445.5 207.9H446.5L446.5 209.3H447.5L447.5 209.4H448.5L448.5 210.6H449.5L449.5 212.1H450.5L450.5 209.0H451.5L451.5 209.9H452.5L452.5 208.7H453.5L453.5 209.3H454.5L454.5 209.4H455.5L455.5 208.4H456.5L456.5 209.0H457.5L457.5 205.4H458.5L458.5 206.5H459.5L459.5 207.9H460.5L460.5 211.1H461.5L461.5 212.7H462.5L462.5 207.8H463.5L463.5 208.0H464.5L464.5 209.1H465.5L465.5 208.8H466.5L466.5 209.3H467.5L467.5 209.8H468.5L468.5 210.6H469.5L469.5 208.3H470.5L470.5 209.4H471.5L471.5 207.7H472.5L472.5 208.2H473.5L473.5 210.4H474.5L474.5 210.8H475.5L475.5 210.6H476.5L476.5 202.0H477.5L477.5 203.5H478.5L478.5 209.6H479.5L479.5 208.9H480.5L480.5 210.0H481.5L481.5 208.0H482.5L482.5 208.8H483.5L483.5 209.1H484.5L484.5 209.8H485.5L485.5 208.1H486.5L486.5 209.3H487.5L487.5 208.7H488.5L488.5 200.0H489.5L489.5 178.5H490.5L490.5 180.2H491.5L491.5 198.6H492.5L492.5 208.7H493.5L493.5 209.1H494.5L494.5 208.3H495.5L495.5 208.6H496.5L496.5 208.3H497.5L497.5 207.5H498.5L498.5 208.2H499.5L499.5 208.2H500.5L500.5 207.8H501.5L501.5 210.8H502.5L502.5 211.9H503.5L503.5 211.9H504.5L504.5 209.5H505.5L505.5 210.9H506.5L506.5 209.7H507.5L507.5 208.4H508.5L508.5 210.6H509.5L509.5 212.1H510.5L510.5 201.5H511.5L511.5 202.3H512.5L512.5 202.2H513.5L513.5 211.1H514.5L514.5 211.5H515.5L515.5 211.2H516.5L516.5 209.7H517.5L517.5 209.9H518.5L518.5 210.1H519.5L519.5 210.0H520.5L520.5 211.2H521.5L521.5 210.1H522.5L522.5 211.2H523.5L523.5 211.6H524.5L524.5 202.1H525.5L525.5 209.4H526.5L526.5 209.9H527.5L527.5 210.6H528.5L528.5 207.7H529.5L529.5 208.8H530.5L530.5 210.2H531.5L531.5 210.7H532.5L532.5 211.1H533.5L533.5 212.1H534.5L534.5 212.5H535.5L535.5 209.3H536.5L536.5 210.0H537.5L537.5 210.3H538.5L538.5 211.0H539.5L539.5 202.0H540.5L540.5 209.8H541.5L541.5 211.1H542.5L542.5 211.0H543.5L543.5 204.0H544.5L544.5 204.9H545.5L545.5 202.9H546.5L546.5 199.6H547.5L547.5 180.2H548.5L548.5 181.9H549.5L549.5 199.5H550.5L550.5 208.6H551.5L551.5 209.2H552.5L552.5 204.9H553.5L553.5 205.9H554.5L554.5 205.2H555.5L555.5 209.0H556.5L556.5 209.7H557.5L557.5 210.2H558.5L558.5 204.6H559.5L559.5 205.5H560.5L560.5 209.0H561.5L561.5 210.0H562.5L562.5 211.1H563.5L563.5 212.7H564.5L564.5 211.8H565.5L565.5 208.5H566.5L566.5 210.1H567.5L567.5 210.8H568.5L568.5 210.1H569.5L569.5 210.1H570.5L570.5 211.3H571.5L571.5 206.1H572.5L572.5 206.4H573.5L573.5 210.9H574.5L574.5 212.2H575.5L575.5 207.6H576.5L576.5 208.9H577.5L577.5 210.6H578.5L578.5 211.9H579.5L579.5 208.5H580.5L580.5 209.3H581.5L581.5 209.2H582.5L582.5 204.9H583.5L583.5 205.2H584.5L584.5 208.9H585.5L585.5 209.9H586.5L586.5 209.3H587.5L587.5 210.9H588.5L588.5 211.3H589.5L589.5 212.8H590.5L590.5 206.0H591.5L591.5 206.9H592.5L592.5 207.3H593.5L593.5 207.9H594.5L594.5 208.9H595.5L595.5 209.2H596.5L596.5 210.5H597.5L597.5 209.0H598.5L598.5 210.2H599.5L599.5 210.0H600.5L600.5 209.9H601.5L601.5 210.4H602.5L602.5 211.3H603.5L603.5 212.0H604.5L604.5 208.2H605.5L605.5 198.0H606.5L606.5 179.6H607.5L607.5 181.3H608.5L608.5 198.7H609.5L609.5 212.6H610.5L610.5 209.4H611.5L611.5 210.1H612.5L612.5 207.8H613.5L613.5 208.1H614.5L614.5 208.7H615.5L615.5 207.7H616.5L616.5 208.1H617.5L617.5 208.6H618.5L618.5 209.1H619.5L619.5 207.8H620.5L620.5 207.8H621.5L621.5 209.2H622.5L622.5 209.9H623.5L623.5 210.0H624.5L624.5 208.1H625.5L625.5 209.5H626.5L626.5 205.9H627.5L627.5 206.3H628.5L628.5 204.1H629.5L629.5 205.2H630.5L630.5 204.8H631.5L631.5 209.7H632.5L632.5 209.7H633.5L633.5 211.0H634.5L634.5 211.1H635.5L635.5 209.2H636.5L636.5 208.5H637.5L637.5 210.1H638.5L638.5 209.0H639.5L639.5 211.0H640.5L640.5 212.2H641.5L641.5 209.6H642.5L642.5 210.8H643.5L643.5 208.4H644.5L644.5 209.3H645.5L645.5 209.0H646.5L646.5 210.8H647.5L647.5 211.2H648.5L648.5 202.8H649.5L649.5 203.9H650.5L650.5 208.6H651.5L651.5 209.7H652.5L652.5 208.5H653.5L653.5 209.9H654.5L654.5 207.8H655.5L655.5 208.2H656.5L656.5 208.8H657.5L657.5 205.1H658.5L658.5 206.7H659.5L659.5 210.7H660.5L660.5 211.9H661.5L661.5 208.4H662.5L662.5 208.9H663.5L663.5 198.8H664.5L664.5 180.2H665.5L665.5 181.9H666.5L666.5 198.6H667.5L667.5 211.3H668.5L668.5 211.8H669.5L669.5 209.3H670.5L670.5 210.5H671.5L671.5 207.7H672.5L672.5 208.3H673.5L673.5 209.4H674.5L674.5 210.2H675.5L675.5 210.5H676.5L676.5 210.0H677.5L677.5 210.6H678.5L678.5 203.0H679.5L679.5 204.7H680.5L680.5 209.7H681.5L681.5 211.2H682.5L682.5 209.7H683.5L683.5 210.2H684.5L684.5 211.7H685.5L685.5 210.3H686.5L686.5 208.1H687.5L687.5 211.0H688.5L688.5 212.0H689.5L689.5 211.8H690.5L690.5 207.8H691.5L691.5 208.9H692.5L692.5 209.9H693.5L693.5 209.3H694.5L694.5 202.1H695.5L695.5 206.1H696.5L696.5 206.2H697.5L697.5 201.9H698.5L698.5 203.4H699.5L699.5 208.9H700.5L700.5 209.0H701.5L701.5 210.2H702.5L702.5 211.0H703.5L703.5 210.6H704.5L704.5 202.6H705.5L705.5 203.1H706.5L706.5 205.6H707.5L707.5 206.0H708.5L708.5 208.6H709.5L709.5 208.8H710.5L710.5 206.2H711.5L711.5 206.5H712.5L712.5 207.4H713.5L713.5 208.2H714.5L714.5 208.9H715.5L715.5 209.3H716.5L716.5 209.6H717.5L717.5 210.0H718.5L718.5 203.9H719.5L719.5 209.9H720.5L720.5 210.1H721.5L721.5 207.8H722.5L722.5 198.8H723.5L723.5 183.5H724.5L724.5 185.2H725.5L725.5 198.6H726.5L726.5 210.6H727.5L727.5 212.2H728.5L728.5 212.1H729.5L729.5 207.9H730.5L730.5 208.0H731.5L731.5 209.0H732.5L732.5 209.9H733.5L733.5 209.5H734.5L734.5 211.1H735.5L735.5 202.7H736.5L736.5 202.8H737.5L737.5 203.7H738.5L738.5 206.0H739.5L739.5 207.6H740.5L740.5 208.8H741.5L741.5 209.0H742.5L742.5 209.6H743.5L743.5 209.3H744.5L744.5 210.1H745.5L745.5 209.6H746.5L746.5 209.2H747.5L747.5 210.2H748.5L748.5 211.4H749.5L749.5 211.5H750.5L750.5 207.9H751.5L751.5 208.7H752.5L752.5 208.3H753.5L753.5 208.9H754.5L754.5 209.8H755.5L755.5 208.3H756.5L756.5 209.9H757.5L757.5 208.6H758.5L758.5 206.9H759.5L759.5 207.0H760.5L760.5 207.9H761.5L761.5 208.7H762.5L762.5 205.3H763.5L763.5 205.4H764.5L764.5 204.9H765.5L765.5 205.8H766.5L766.5 206.4H767.5L767.5 209.8H768.5L768.5 209.9H769.5L769.5 209.8H770.5L770.5 208.5H771.5L771.5 210.1H772.5L772.5 210.8H773.5L773.5 212.1H774.5L774.5 211.4H775.5L775.5 210.8H776.5L776.5 212.3H777.5L777.5 211.1H778.5L778.5 211.4H779.5L779.5 206.2H780.5L780.5 199.4H781.5L781.5 184.1H782.5L782.5 185.7H783.5L783.5 199.9H784.5L784.5 207.8H785.5L785.5 209.4H786.5L786.5 209.1H787.5L787.5 209.1H788.5L788.5 209.5H789.5L789.5 211.0H790.5L790.5 212.3H791.5L791.5 212.1H792.5L792.5 209.6H793.5L793.5 209.8H794.5L794.5 207.6H795.5L795.5 207.7H796.5L796.5 208.2H797.5L797.5 208.8H798.5L798.5 209.2H799.5L799.5 203.5H800.5L800.5 203.9H801.5L801.5 209.2H802.5L802.5 210.7H803.5L803.5 210.6H804.5L804.5 208.1H805.5L805.5 209.6H806.5L806.5 209.4H807.5L807.5 211.0H808.5L808.5 210.2H809.5L809.5 206.9H810.5L810.5 207.4H811.5L811.5 204.6H812.5L812.5 205.2H813.5L813.5 210.7H814.5L814.5 211.1H815.5L815.5 211.4H816.5L816.5 211.6H817.5L817.5 212.7H818.5L818.5 208.4H819.5L819.5 209.7H820.5L820.5 208.5H821.5L821.5 209.6H822.5L822.5 209.8H823.5L823.5 211.7H824.5L824.5 211.7H825.5L825.5 212.5H826.5L826.5 207.2H827.5L827.5 210.9H828.5L828.5 211.3H829.5L829.5 208.0H830.5L830.5 208.9H831.5L831.5 208.2H832.5L832.5 208.7H833.5L833.5 209.3H834.5L834.5 207.9H835.5L835.5 209.0H836.5L836.5 207.9H837.5L837.5 208.9H838.5L838.5 207.9H839.5L839.5 199.9H840.5L840.5 189.0H841.5L841.5 190.7H842.5L842.5 200.1H843.5L843.5 210.5H844.5L844.5 211.4H845.5L845.5 210.3H846.5L846.5 208.9H847.5L847.5 209.1H848.5L848.5 210.3H849.5L849.5 209.0H850.5L850.5 209.2H851.5L851.5 210.4H852.5L852.5 211.9H853.5L853.5 209.8H854.5L854.5 209.1H855.5L855.5 210.6H856.5L856.5 209.6H857.5L857.5 210.0H858.5L858.5 211.4H859.5L859.5 210.1H860.5L860.5 211.1H861.5L861.5 211.4H862.5L862.5 206.6H863.5L863.5 207.1H864.5L864.5 210.1H865.5L865.5 211.1H866.5L866.5 211.7H867.5L867.5 211.7H868.5L868.5 206.5H869.5L869.5 206.7H870.5L870.5 206.8H871.5L871.5 208.9H872.5L872.5 208.2H873.5L873.5 209.2H874.5L874.5 209.0H875.5L875.5 208.7H876.5L876.5 209.2H877.5L877.5 210.3H878.5L878.5 203.8H879.5L879.5 208.5H880.5L880.5 209.3H881.5L881.5 208.8H882.5L882.5 210.5H883.5L883.5 211.8H884.5L884.5 210.7H885.5L885.5 211.7H886.5L886.5 209.3H887.5L887.5 209.4H888.5L888.5 210.2H889.5L889.5 211.7H890.5L890.5 210.0H891.5L891.5 210.7H892.5L892.5 210.4H893.5L893.5 208.6H894.5L894.5 210.0H895.5L895.5 210.2H896.5L896.5 210.9H897.5L897.5 212.4H898.5L898.5 199.3H899.5L899.5 195.7H900.5L900.5 204.5H901.5L901.5 199.8H902.5L902.5 208.4H903.5L903.5 208.2H904.5L904.5 209.4H905.5L905.5 210.5H906.5L906.5 208.0H907.5L907.5 208.1H908.5L908.5 209.8H909.5L909.5 209.9H910.5L910.5 211.7H911.5L911.5 212.6H912.5L912.5 205.4H913.5L913.5 206.0H914.5L914.5 207.0H915.5L915.5 208.1H916.5L916.5 209.7H917.5L917.5 208.2H918.5L918.5 208.6H919.5L919.5 209.1H920.5L920.5 211.7H921.5L921.5 212.3H922.5L922.5 209.1H923.5L923.5 210.7H924.5L924.5 209.5H925.5L925.5 211.2H926.5L926.5 210.6H927.5L927.5 199.8H928.5L928.5 196.8H929.5L929.5 205.6H930.5L930.5 199.0H931.5L931.5 208.9H932.5L932.5 208.4H933.5L933.5 211.2H934.5L934.5 211.6H935.5L935.5 212.6H936.5L936.5 210.2H937.5L937.5 211.6H938.5L938.5 210.8H939.5L939.5 202.2H940.5L940.5 203.0H941.5L941.5 202.6H942.5L942.5 209.4H943.5L943.5 210.8H944.5L944.5 210.0H945.5L945.5 204.5H946.5L946.5 205.8H947.5L947.5 210.3H948.5L948.5 210.4H949.5L949.5 210.9H950.5L950.5 211.5H951.5L951.5 211.3H952.5L952.5 210.9H953.5L953.5 211.4H954.5L954.5 208.7H955.5L955.5 209.5H956.5L956.5 197.9H957.5L957.5 196.2H958.5L958.5 205.1H959.5L959.5 198.6H960.5L960.5 209.1H961.5L961.5 210.7H962.5L962.5 208.1H963.5L963.5 208.8H964.5L964.5 205.7H965.5L965.5 207.0H966.5L966.5 206.4H967.5L967.5 203.5H968.5L968.5 203.8H969.5L969.5 208.8H970.5L970.5 209.0H971.5L971.5 209.8H972.5L972.5 208.2H973.5L973.5 209.4H974.5L974.5 209.8H975.5L975.5 211.0H976.5L976.5 211.9H977.5L977.5 208.8H978.5L978.5 210.2H979.5L979.5 209.6H980.5L980.5 208.9H981.5L981.5 208.7H982.5L982.5 209.3H983.5L983.5 209.5H984.5L984.5 211.6H985.5L985.5 212.7H986.5L986.5 199.5H987.5L987.5 193.5H988.5L988.5 202.3H989.5L989.5 198.4H990.5L990.5 212.7H991.5L991.5 211.0H992.5L992.5 211.0H993.5L993.5 211.4H994.5L994.5 212.3H995.5L995.5 205.4H996.5L996.5 206.1H997.5L997.5 205.9H998.5L998.5 209.3H999.5L999.5 209.6H1000.5L1000.5 210.6H1001.5L1001.5 210.5H1002.5L1002.5 211.4H1003.5L1003.5 211.8H1004.5L1004.5 212.9H1005.5L1005.5 212.7H1006.5L1006.5 208.4H1007.5L1007.5 208.5H1008.5L1008.5 211.6H1009.5L1009.5 212.0H1010.5L1010.5 212.8H1011.5L1011.5 208.6H1012.5L1012.5 208.6H1013.5L1013.5 210.0H1014.5L1014.5 210.3H1015.5L1015.5 199.7H1016.5L1016.5 195.7H1017.5L1017.5 204.5H1018.5L1018.5 199.9H1019.5L1019.5 204.8H1020.5L1020.5 205.0H1021.5L1021.5 208.2H1022.5L1022.5 209.3H1023.5L1023.5 211.2H1024.5L1024.5 208.3H1025.5L1025.5 208.3H1026.5L1026.5 209.2H1027.5L1027.5 208.7H1028.5L1028.5 211.9H1029.5L1029.5 212.3H1030.5L1030.5 211.7H1031.5L1031.5 207.3H1032.5L1032.5 208.0H1033.5L1033.5 207.5H1034.5L1034.5 208.3H1035.5L1035.5 206.9H1036.5L1036.5 207.0H1037.5L1037.5 208.0H1038.5L1038.5 208.3H1039.5L1039.5 208.8H1040.5L1040.5 208.2H1041.5L1041.5 208.4H1042.5L1042.5 208.6H1043.5L1043.5 208.7H1044.5L1044.5 199.4H1045.5L1045.5 192.9H1046.5L1046.5 201.7H1047.5L1047.5 198.6H1048.5L1048.5 193.5H1049.5L1049.5 202.3H1050.5L1050.5 199.1H1051.5L1051.5 212.4H1052.5L1052.5 208.9H1053.5L1053.5 209.1H1054.5L1054.5 210.2H1055.5L1055.5 208.7H1056.5L1056.5 209.7H1057.5L1057.5 208.2H1058.5L1058.5 209.5H1059.5L1059.5 208.9H1060.5L1060.5 210.4H1061.5L1061.5 211.8H1062.5L1062.5 209.0H1063.5L1063.5 209.4H1064.5L1064.5 209.8H1065.5L1065.5 210.2H1066.5L1066.5 211.4H1067.5L1067.5 209.9H1068.5L1068.5 210.5H1069.5L1069.5 210.5H1070.5L1070.5 209.2H1071.5L1071.5 210.7H1072.5L1072.5 209.0H1073.5L1073.5 210.5H1074.5L1074.5 198.5H1075.5L1075.5 196.8H1076.5L1076.5 205.6H1077.5L1077.5 199.9H1078.5L1078.5 205.3H1079.5L1079.5 205.9H1080.5L1080.5 210.5H1081.5L1081.5 211.4H1082.5L1082.5 210.6H1083.5L1083.5 208.4H1084.5L1084.5 208.7H1085.5L1085.5 209.2H1086.5L1086.5 208.5H1087.5L1087.5 209.5H1088.5L1088.5 212.0H1089.5L1089.5 210.9H1090.5L1090.5 212.5H1091.5L1091.5 212.2H1092.5L1092.5 209.7H1093.5L1093.5 210.3H1094.5L1094.5 211.2H1095.5L1095.5 212.1H1096.5L1096.5 209.0H1097.5L1097.5 210.0H1098.5L1098.5 211.9H1099.5L1099.5 212.2H1100.5L1100.5 209.4H1101.5L1101.5 210.7H1102.5L1102.5 208.7H1103.5L1103.5 208.6H1104.5L1104.5 209.5H1105.5L1105.5 210.0H1106.5L1106.5 208.9H1107.5L1107.5 206.9H1108.5L1108.5 208.0H1109.5L1109.5 211.8H1110.5L1110.5 213.0H1111.5L1111.5 212.5H1112.5L1112.5 211.7H1113.5L1113.5 210.6H1114.5L1114.5 211.9H1115.5L1115.5 211.3H1116.5L1116.5 211.4H1117.5L1117.5 212.1H1118.5L1118.5 208.5H1119.5L1119.5 209.3H1120.5L1120.5 208.8H1121.5L1121.5 210.1H1122.5L1122.5 210.2H1123.5L1123.5 210.5H1124.5L1124.5 212.0H1125.5L1125.5 209.3H1126.5L1126.5 210.0H1127.5L1127.5 210.5H1128.5L1128.5 211.3H1129.5L1129.5 211.4H1130.5L1130.5 212.9H1131.5L1131.5 208.3H1132.5L1132.5 198.0H1133.5L1133.5 195.7H1134.5L1134.5 204.5H1135.5L1135.5 199.3H1136.5L1136.5 208.2H1137.5L1137.5 208.0H1138.5L1138.5 209.0H1139.5L1139.5 209.4H1140.5L1140.5 209.0H1141.5L1141.5 209.1H1142.5L1142.5 209.6H1143.5L1143.5 208.8H1144.5L1144.5 210.4H1145.5L1145.5 208.4H1146.5L1146.5 209.5H1147.5L1147.5 208.7H1148.5L1148.5 210.0H1149.5L1149.5 208.3H1150.5L1150.5 209.6H1151.5L1151.5 209.5H1152.5L1152.5 210.9H1153.5L1153.5 212.1H1154.5L1154.5 209.5H1155.5L1155.5 210.4H1156.5L1156.5 208.7H1157.5L1157.5 208.7H1158.5L1158.5 209.2H1159.5L1159.5 206.5H1160.5L1160.5 207.3H1161.5L1161.5 198.3H1162.5L1162.5 199.0H1163.5L1163.5 207.8H1164.5L1164.5 199.6H1165.5L1165.5 204.3H1166.5L1166.5 210.8H1167.5L1167.5 211.1H1168.5L1168.5 212.1H1169.5L1169.5 208.3H1170.5L1170.5 208.8H1171.5L1171.5 210.4H1172.5L1172.5 210.7H1173.5L1173.5 204.4H1174.5L1174.5 205.1H1175.5L1175.5 210.7H1176.5L1176.5 211.9H1177.5L1177.5 211.0H1178.5L1178.5 212.1H1179.5L1179.5 213.1H1180.5L1180.5 213.0H1181.5L1181.5 208.9H1182.5L1182.5 210.2H1183.5L1183.5 210.0H1184.5L1184.5 208.9H1185.5L1185.5 206.2H1186.5L1186.5 206.3H1187.5L1187.5 204.5H1188.5L1188.5 205.8H1189.5L1189.5 209.2H1190.5L1190.5 210.7H1191.5L1191.5 198.3H1192.5L1192.5 197.3H1193.5L1193.5 206.2H1194.5L1194.5 200.0H1195.5L1195.5 209.7H1196.5L1196.5 208.5H1197.5L1197.5 210.6H1198.5L1198.5 211.8H1199.5L1199.5 211.5H1200.5L1200.5 212.0H1201.5L1201.5 209.9H1202.5L1202.5 210.0H1203.5L1203.5 210.8H1204.5L1204.5 211.4H1205.5L1205.5 211.8H1206.5L1206.5 208.2H1207.5L1207.5 209.3H1208.5L1208.5 209.7H1209.5L1209.5 208.8H1210.5L1210.5 211.2H1211.5L1211.5 211.5H1212.5L1212.5 210.6H1213.5L1213.5 211.8H1214.5L1214.5 211.9H1215.5L1215.5 208.4H1216.5L1216.5 208.9H1217.5L1217.5 209.7H1218.5L1218.5 204.1H1219.5L1219.5 203.9H1220.5L1220.5 204.4H1221.5L1221.5 210.8H1222.5L1222.5 223.2H1221.5L1221.5 233.2H1220.5L1220.5 236.2H1219.5L1219.5 224.9H1218.5L1218.5 227.4H1217.5L1217.5 227.8H1216.5L1216.5 230.4H1215.5L1215.5 227.7H1214.5L1214.5 226.7H1213.5L1213.5 227.7H1212.5L1212.5 222.3H1211.5L1211.5 222.9H1210.5L1210.5 226.0H1209.5L1209.5 220.4H1208.5L1208.5 222.6H1207.5L1207.5 223.0H1206.5L1206.5 223.7H1205.5L1205.5 224.7H1204.5L1204.5 226.8H1203.5L1203.5 225.0H1202.5L1202.5 225.1H1201.5L1201.5 220.8H1200.5L1200.5 223.3H1199.5L1199.5 238.0H1198.5L1198.5 238.3H1197.5L1197.5 220.7H1196.5L1196.5 221.3H1195.5L1195.5 222.8H1194.5L1194.5 227.6H1193.5L1193.5 227.5H1192.5L1192.5 228.9H1191.5L1191.5 230.9H1190.5L1190.5 231.1H1189.5L1189.5 228.0H1188.5L1188.5 228.6H1187.5L1187.5 225.7H1186.5L1186.5 227.3H1185.5L1185.5 246.5H1184.5L1184.5 221.8H1183.5L1183.5 221.5H1182.5L1182.5 224.2H1181.5L1181.5 225.0H1180.5L1180.5 225.9H1179.5L1179.5 226.3H1178.5L1178.5 226.9H1177.5L1177.5 226.2H1176.5L1176.5 229.1H1175.5L1175.5 221.5H1174.5L1174.5 223.4H1173.5L1173.5 225.6H1172.5L1172.5 226.4H1171.5L1171.5 230.6H1170.5L1170.5 229.3H1169.5L1169.5 228.7H1168.5L1168.5 230.1H1167.5L1167.5 230.4H1166.5L1166.5 227.1H1165.5L1165.5 228.6H1164.5L1164.5 228.7H1163.5L1163.5 230.0H1162.5L1162.5 221.0H1161.5L1161.5 220.3H1160.5L1160.5 223.6H1159.5L1159.5 228.5H1158.5L1158.5 230.9H1157.5L1157.5 231.4H1156.5L1156.5 226.0H1155.5L1155.5 227.9H1154.5L1154.5 230.5H1153.5L1153.5 230.7H1152.5L1152.5 226.6H1151.5L1151.5 228.7H1150.5L1150.5 229.3H1149.5L1149.5 223.1H1148.5L1148.5 223.3H1147.5L1147.5 221.1H1146.5L1146.5 223.5H1145.5L1145.5 230.4H1144.5L1144.5 231.5H1143.5L1143.5 227.9H1142.5L1142.5 230.7H1141.5L1141.5 231.0H1140.5L1140.5 226.7H1139.5L1139.5 227.2H1138.5L1138.5 225.1H1137.5L1137.5 225.8H1136.5L1136.5 227.7H1135.5L1135.5 231.2H1134.5L1134.5 231.3H1133.5L1133.5 221.8H1132.5L1132.5 223.4H1131.5L1131.5 221.4H1130.5L1130.5 221.8H1129.5L1129.5 224.0H1128.5L1128.5 225.3H1127.5L1127.5 224.9H1126.5L1126.5 227.9H1125.5L1125.5 224.0H1124.5L1124.5 226.5H1123.5L1123.5 223.6H1122.5L1122.5 221.8H1121.5L1121.5 224.0H1120.5L1120.5 220.2H1119.5L1119.5 223.0H1118.5L1118.5 220.4H1117.5L1117.5 223.5H1116.5L1116.5 222.9H1115.5L1115.5 224.4H1114.5L1114.5 225.5H1113.5L1113.5 223.7H1112.5L1112.5 232.6H1111.5L1111.5 233.0H1110.5L1110.5 235.2H1109.5L1109.5 221.7H1108.5L1108.5 222.7H1107.5L1107.5 230.6H1106.5L1106.5 221.5H1105.5L1105.5 220.6H1104.5L1104.5 222.8H1103.5L1103.5 226.0H1102.5L1102.5 223.7H1101.5L1101.5 225.2H1100.5L1100.5 223.7H1099.5L1099.5 224.8H1098.5L1098.5 225.0H1097.5L1097.5 228.2H1096.5L1096.5 222.2H1095.5L1095.5 225.1H1094.5L1094.5 222.5H1093.5L1093.5 225.2H1092.5L1092.5 224.6H1091.5L1091.5 224.7H1090.5L1090.5 226.9H1089.5L1089.5 227.3H1088.5L1088.5 228.4H1087.5L1087.5 230.3H1086.5L1086.5 221.6H1085.5L1085.5 222.8H1084.5L1084.5 224.8H1083.5L1083.5 238.6H1082.5L1082.5 239.2H1081.5L1081.5 241.5H1080.5L1080.5 223.8H1079.5L1079.5 225.9H1078.5L1078.5 228.3H1077.5L1077.5 228.7H1076.5L1076.5 230.0H1075.5L1075.5 230.9H1074.5L1074.5 226.1H1073.5L1073.5 229.3H1072.5L1072.5 229.0H1071.5L1071.5 230.3H1070.5L1070.5 222.9H1069.5L1069.5 221.0H1068.5L1068.5 224.0H1067.5L1067.5 221.6H1066.5L1066.5 223.1H1065.5L1065.5 224.9H1064.5L1064.5 226.1H1063.5L1063.5 230.9H1062.5L1062.5 222.4H1061.5L1061.5 225.0H1060.5L1060.5 222.3H1059.5L1059.5 224.4H1058.5L1058.5 225.5H1057.5L1057.5 223.9H1056.5L1056.5 227.0H1055.5L1055.5 225.9H1054.5L1054.5 223.5H1053.5L1053.5 226.7H1052.5L1052.5 226.1H1051.5L1051.5 226.8H1050.5L1050.5 228.8H1049.5L1049.5 225.5H1048.5L1048.5 226.4H1047.5L1047.5 223.1H1046.5L1046.5 233.6H1045.5L1045.5 236.4H1044.5L1044.5 228.2H1043.5L1043.5 228.2H1042.5L1042.5 220.8H1041.5L1041.5 223.5H1040.5L1040.5 224.2H1039.5L1039.5 227.3H1038.5L1038.5 224.6H1037.5L1037.5 225.3H1036.5L1036.5 227.3H1035.5L1035.5 224.1H1034.5L1034.5 227.9H1033.5L1033.5 227.7H1032.5L1032.5 229.7H1031.5L1031.5 229.2H1030.5L1030.5 228.3H1029.5L1029.5 228.6H1028.5L1028.5 222.2H1027.5L1027.5 222.4H1026.5L1026.5 223.6H1025.5L1025.5 223.5H1024.5L1024.5 226.2H1023.5L1023.5 228.4H1022.5L1022.5 228.7H1021.5L1021.5 221.2H1020.5L1020.5 223.1H1019.5L1019.5 225.5H1018.5L1018.5 226.0H1017.5L1017.5 225.3H1016.5L1016.5 225.9H1015.5L1015.5 232.2H1014.5L1014.5 232.7H1013.5L1013.5 229.0H1012.5L1012.5 224.7H1011.5L1011.5 229.1H1010.5L1010.5 229.6H1009.5L1009.5 230.7H1008.5L1008.5 223.7H1007.5L1007.5 224.9H1006.5L1006.5 222.4H1005.5L1005.5 221.9H1004.5L1004.5 222.7H1003.5L1003.5 224.0H1002.5L1002.5 224.7H1001.5L1001.5 227.7H1000.5L1000.5 229.1H999.5L999.5 230.6H998.5L998.5 226.1H997.5L997.5 226.9H996.5L996.5 229.1H995.5L995.5 227.5H994.5L994.5 227.3H993.5L993.5 228.0H992.5L992.5 222.6H991.5L991.5 239.8H990.5L990.5 239.9H989.5L989.5 221.8H988.5L988.5 223.8H987.5L987.5 227.0H986.5L986.5 223.6H985.5L985.5 226.0H984.5L984.5 220.8H983.5L983.5 221.2H982.5L982.5 222.8H981.5L981.5 225.3H980.5L980.5 223.3H979.5L979.5 222.9H978.5L978.5 224.7H977.5L977.5 223.4H976.5L976.5 223.4H975.5L975.5 229.7H974.5L974.5 237.7H973.5L973.5 239.3H972.5L972.5 225.3H971.5L971.5 222.5H970.5L970.5 225.3H969.5L969.5 220.7H968.5L968.5 222.5H967.5L967.5 223.1H966.5L966.5 224.6H965.5L965.5 226.0H964.5L964.5 238.5H963.5L963.5 239.8H962.5L962.5 228.2H961.5L961.5 230.5H960.5L960.5 230.2H959.5L959.5 231.0H958.5L958.5 226.0H957.5L957.5 227.5H956.5L956.5 225.5H955.5L955.5 225.8H954.5L954.5 244.7H953.5L953.5 246.5H952.5L952.5 222.2H951.5L951.5 221.7H950.5L950.5 223.4H949.5L949.5 222.4H948.5L948.5 224.5H947.5L947.5 221.3H946.5L946.5 223.1H945.5L945.5 226.8H944.5L944.5 229.4H943.5L943.5 229.5H942.5L942.5 226.0H941.5L941.5 223.9H940.5L940.5 226.6H939.5L939.5 226.9H938.5L938.5 226.0H937.5L937.5 228.9H936.5L936.5 222.6H935.5L935.5 220.6H934.5L934.5 222.8H933.5L933.5 227.7H932.5L932.5 226.5H931.5L931.5 229.8H930.5L930.5 221.7H929.5L929.5 220.6H928.5L928.5 222.7H927.5L927.5 227.9H926.5L926.5 225.4H925.5L925.5 228.2H924.5L924.5 225.5H923.5L923.5 225.5H922.5L922.5 227.0H921.5L921.5 228.4H920.5L920.5 221.6H919.5L919.5 222.7H918.5L918.5 219.9H917.5L917.5 221.9H916.5L916.5 222.5H915.5L915.5 223.3H914.5L914.5 225.6H913.5L913.5 226.3H912.5L912.5 220.4H911.5L911.5 222.5H910.5L910.5 242.5H909.5L909.5 242.9H908.5L908.5 227.5H907.5L907.5 229.1H906.5L906.5 224.2H905.5L905.5 225.5H904.5L904.5 226.3H903.5L903.5 230.9H902.5L902.5 231.2H901.5L901.5 234.6H900.5L900.5 234.7H899.5L899.5 237.1H898.5L898.5 224.3H897.5L897.5 224.8H896.5L896.5 223.7H895.5L895.5 224.7H894.5L894.5 226.3H893.5L893.5 221.6H892.5L892.5 223.4H891.5L891.5 224.1H890.5L890.5 222.7H889.5L889.5 223.9H888.5L888.5 240.9H887.5L887.5 243.1H886.5L886.5 229.9H885.5L885.5 231.1H884.5L884.5 228.2H883.5L883.5 229.9H882.5L882.5 236.2H881.5L881.5 237.4H880.5L880.5 239.3H879.5L879.5 231.0H878.5L878.5 230.6H877.5L877.5 229.3H876.5L876.5 231.0H875.5L875.5 226.9H874.5L874.5 224.3H873.5L873.5 227.0H872.5L872.5 224.9H871.5L871.5 225.9H870.5L870.5 227.9H869.5L869.5 228.4H868.5L868.5 229.6H867.5L867.5 230.6H866.5L866.5 222.9H865.5L865.5 228.0H864.5L864.5 242.6H863.5L863.5 245.5H862.5L862.5 225.6H861.5L861.5 228.2H860.5L860.5 228.5H859.5L859.5 231.5H858.5L858.5 232.5H857.5L857.5 222.7H856.5L856.5 221.8H855.5L855.5 222.7H854.5L854.5 224.9H853.5L853.5 228.6H852.5L852.5 230.6H851.5L851.5 228.1H850.5L850.5 230.5H849.5L849.5 222.4H848.5L848.5 223.9H847.5L847.5 223.9H846.5L846.5 230.0H845.5L845.5 226.2H844.5L844.5 227.5H843.5L843.5 225.9H842.5L842.5 229.1H841.5L841.5 227.6H840.5L840.5 226.8H839.5L839.5 228.9H838.5L838.5 224.5H837.5L837.5 224.9H836.5L836.5 237.1H835.5L835.5 238.0H834.5L834.5 229.0H833.5L833.5 230.6H832.5L832.5 222.6H831.5L831.5 223.6H830.5L830.5 223.8H829.5L829.5 224.9H828.5L828.5 228.1H827.5L827.5 229.3H826.5L826.5 222.6H825.5L825.5 220.9H824.5L824.5 224.2H823.5L823.5 225.1H822.5L822.5 228.0H821.5L821.5 245.6H820.5L820.5 244.9H819.5L819.5 246.5H818.5L818.5 222.2H817.5L817.5 220.7H816.5L816.5 222.6H815.5L815.5 220.7H814.5L814.5 222.4H813.5L813.5 235.2H812.5L812.5 236.4H811.5L811.5 244.2H810.5L810.5 246.5H809.5L809.5 227.7H808.5L808.5 227.3H807.5L807.5 228.0H806.5L806.5 224.2H805.5L805.5 226.3H804.5L804.5 225.8H803.5L803.5 226.2H802.5L802.5 228.1H801.5L801.5 233.2H800.5L800.5 234.9H799.5L799.5 222.4H798.5L798.5 225.7H797.5L797.5 226.0H796.5L796.5 225.7H795.5L795.5 227.9H794.5L794.5 222.1H793.5L793.5 225.0H792.5L792.5 228.8H791.5L791.5 230.6H790.5L790.5 230.8H789.5L789.5 225.5H788.5L788.5 224.8H787.5L787.5 234.4H786.5L786.5 235.1H785.5L785.5 235.6H784.5L784.5 228.7H783.5L783.5 229.7H782.5L782.5 221.6H781.5L781.5 219.9H780.5L780.5 223.1H779.5L779.5 225.1H778.5L778.5 226.1H777.5L777.5 232.8H776.5L776.5 236.1H775.5L775.5 222.8H774.5L774.5 223.6H773.5L773.5 224.6H772.5L772.5 226.9H771.5L771.5 227.5H770.5L770.5 226.8H769.5L769.5 225.6H768.5L768.5 228.1H767.5L767.5 223.4H766.5L766.5 225.5H765.5L765.5 225.6H764.5L764.5 228.7H763.5L763.5 231.1H762.5L762.5 228.9H761.5L761.5 230.8H760.5L760.5 224.0H759.5L759.5 224.9H758.5L758.5 219.7H757.5L757.5 220.7H756.5L756.5 223.0H755.5L755.5 225.2H754.5L754.5 224.7H753.5L753.5 225.6H752.5L752.5 221.5H751.5L751.5 223.1H750.5L750.5 225.4H749.5L749.5 226.6H748.5L748.5 230.1H747.5L747.5 230.6H746.5L746.5 227.2H745.5L745.5 227.2H744.5L744.5 229.5H743.5L743.5 226.3H742.5L742.5 226.2H741.5L741.5 229.3H740.5L740.5 227.4H739.5L739.5 228.8H738.5L738.5 228.7H737.5L737.5 226.0H736.5L736.5 228.8H735.5L735.5 223.9H734.5L734.5 226.1H733.5L733.5 221.1H732.5L732.5 223.2H731.5L731.5 228.2H730.5L730.5 228.4H729.5L729.5 246.2H728.5L728.5 245.2H727.5L727.5 246.5H726.5L726.5 229.6H725.5L725.5 229.7H724.5L724.5 235.1H723.5L723.5 236.4H722.5L722.5 229.1H721.5L721.5 223.8H720.5L720.5 224.4H719.5L719.5 228.4H718.5L718.5 221.0H717.5L717.5 223.9H716.5L716.5 225.3H715.5L715.5 225.7H714.5L714.5 226.2H713.5L713.5 228.1H712.5L712.5 228.2H711.5L711.5 229.4H710.5L710.5 245.8H709.5L709.5 246.5H708.5L708.5 228.6H707.5L707.5 229.3H706.5L706.5 222.3H705.5L705.5 225.2H704.5L704.5 223.8H703.5L703.5 221.8H702.5L702.5 224.4H701.5L701.5 227.7H700.5L700.5 229.9H699.5L699.5 226.9H698.5L698.5 229.6H697.5L697.5 225.0H696.5L696.5 225.2H695.5L695.5 226.9H694.5L694.5 226.6H693.5L693.5 227.0H692.5L692.5 227.5H691.5L691.5 226.3H690.5L690.5 221.4H689.5L689.5 222.6H688.5L688.5 223.1H687.5L687.5 226.6H686.5L686.5 246.4H685.5L685.5 245.2H684.5L684.5 246.5H683.5L683.5 224.8H682.5L682.5 227.8H681.5L681.5 229.2H680.5L680.5 224.9H679.5L679.5 227.9H678.5L678.5 222.5H677.5L677.5 222.7H676.5L676.5 226.5H675.5L675.5 228.3H674.5L674.5 229.8H673.5L673.5 241.6H672.5L672.5 243.2H671.5L671.5 224.9H670.5L670.5 226.2H669.5L669.5 244.7H668.5L668.5 246.5H667.5L667.5 221.3H666.5L666.5 224.5H665.5L665.5 225.2H664.5L664.5 226.4H663.5L663.5 224.0H662.5L662.5 226.6H661.5L661.5 240.2H660.5L660.5 241.2H659.5L659.5 225.0H658.5L658.5 226.9H657.5L657.5 227.9H656.5L656.5 228.1H655.5L655.5 230.2H654.5L654.5 225.0H653.5L653.5 227.7H652.5L652.5 223.2H651.5L651.5 226.2H650.5L650.5 225.3H649.5L649.5 227.0H648.5L648.5 223.3H647.5L647.5 226.6H646.5L646.5 243.4H645.5L645.5 243.3H644.5L644.5 246.5H643.5L643.5 225.9H642.5L642.5 227.5H641.5L641.5 223.1H640.5L640.5 224.1H639.5L639.5 229.9H638.5L638.5 219.5H637.5L637.5 222.5H636.5L636.5 230.5H635.5L635.5 226.9H634.5L634.5 227.2H633.5L633.5 227.7H632.5L632.5 229.8H631.5L631.5 223.2H630.5L630.5 223.7H629.5L629.5 224.5H628.5L628.5 229.2H627.5L627.5 230.6H626.5L626.5 222.4H625.5L625.5 225.4H624.5L624.5 241.0H623.5L623.5 242.2H622.5L622.5 225.3H621.5L621.5 228.4H620.5L620.5 223.0H619.5L619.5 229.5H618.5L618.5 230.5H617.5L617.5 232.0H616.5L616.5 246.5H615.5L615.5 219.5H614.5L614.5 221.6H613.5L613.5 222.7H612.5L612.5 236.9H611.5L611.5 237.0H610.5L610.5 220.0H609.5L609.5 219.8H608.5L608.5 222.5H607.5L607.5 229.2H606.5L606.5 228.0H605.5L605.5 229.2H604.5L604.5 227.8H603.5L603.5 229.3H602.5L602.5 229.3H601.5L601.5 229.3H600.5L600.5 222.8H599.5L599.5 220.8H598.5L598.5 223.5H597.5L597.5 220.3H596.5L596.5 223.2H595.5L595.5 229.6H594.5L594.5 230.1H593.5L593.5 222.3H592.5L592.5 224.0H591.5L591.5 225.5H590.5L590.5 222.5H589.5L589.5 222.7H588.5L588.5 221.4H587.5L587.5 222.8H586.5L586.5 220.5H585.5L585.5 223.1H584.5L584.5 227.7H583.5L583.5 229.3H582.5L582.5 227.8H581.5L581.5 225.3H580.5L580.5 228.3H579.5L579.5 224.0H578.5L578.5 225.5H577.5L577.5 221.7H576.5L576.5 224.8H575.5L575.5 225.2H574.5L574.5 225.7H573.5L573.5 233.4H572.5L572.5 234.2H571.5L571.5 232.6H570.5L570.5 233.8H569.5L569.5 234.5H568.5L568.5 242.6H567.5L567.5 225.0H566.5L566.5 228.1H565.5L565.5 225.1H564.5L564.5 224.4H563.5L563.5 226.6H562.5L562.5 226.8H561.5L561.5 229.9H560.5L560.5 226.4H559.5L559.5 229.3H558.5L558.5 221.2H557.5L557.5 220.7H556.5L556.5 223.9H555.5L555.5 219.4H554.5L554.5 221.9H553.5L553.5 222.2H552.5L552.5 238.1H551.5L551.5 238.5H550.5L550.5 221.5H549.5L549.5 220.7H548.5L548.5 223.4H547.5L547.5 225.6H546.5L546.5 228.6H545.5L545.5 227.9H544.5L544.5 227.9H543.5L543.5 232.5H542.5L542.5 234.9H541.5L541.5 235.6H540.5L540.5 230.9H539.5L539.5 220.2H538.5L538.5 222.1H537.5L537.5 221.2H536.5L536.5 223.7H535.5L535.5 227.1H534.5L534.5 225.9H533.5L533.5 229.1H532.5L532.5 223.0H531.5L531.5 223.9H530.5L530.5 223.3H529.5L529.5 224.7H528.5L528.5 227.6H527.5L527.5 226.1H526.5L526.5 229.2H525.5L525.5 237.6H524.5L524.5 226.3H523.5L523.5 223.5H522.5L522.5 226.5H521.5L521.5 219.5H520.5L520.5 222.3H519.5L519.5 227.6H518.5L518.5 227.9H517.5L517.5 229.4H516.5L516.5 237.0H515.5L515.5 236.6H514.5L514.5 237.1H513.5L513.5 224.7H512.5L512.5 226.6H511.5L511.5 226.6H510.5L510.5 244.8H509.5L509.5 246.5H508.5L508.5 228.7H507.5L507.5 220.1H506.5L506.5 221.8H505.5L505.5 223.1H504.5L504.5 226.3H503.5L503.5 225.0H502.5L502.5 227.0H501.5L501.5 226.9H500.5L500.5 224.6H499.5L499.5 223.1H498.5L498.5 225.0H497.5L497.5 224.1H496.5L496.5 227.9H495.5L495.5 229.6H494.5L494.5 223.7H493.5L493.5 226.4H492.5L492.5 221.5H491.5L491.5 224.5H490.5L490.5 246.5H489.5L489.5 230.2H488.5L488.5 223.1H487.5L487.5 224.6H486.5L486.5 225.2H485.5L485.5 220.2H484.5L484.5 222.1H483.5L483.5 227.8H482.5L482.5 222.9H481.5L481.5 222.1H480.5L480.5 222.5H479.5L479.5 228.7H478.5L478.5 226.7H477.5L477.5 228.7H476.5L476.5 245.7H475.5L475.5 246.2H474.5L474.5 246.5H473.5L473.5 232.9H472.5L472.5 236.0H471.5L471.5 224.0H470.5L470.5 224.3H469.5L469.5 228.0H468.5L468.5 230.7H467.5L467.5 237.3H466.5L466.5 240.1H465.5L465.5 225.4H464.5L464.5 225.8H463.5L463.5 228.0H462.5L462.5 225.3H461.5L461.5 225.5H460.5L460.5 230.2H459.5L459.5 228.0H458.5L458.5 230.0H457.5L457.5 222.5H456.5L456.5 222.7H455.5L455.5 243.2H454.5L454.5 244.0H453.5L453.5 246.5H452.5L452.5 228.3H451.5L451.5 228.6H450.5L450.5 221.7H449.5L449.5 222.1H448.5L448.5 227.5H447.5L447.5 226.3H446.5L446.5 227.9H445.5L445.5 227.2H444.5L444.5 226.5H443.5L443.5 227.6H442.5L442.5 225.6H441.5L441.5 225.0H440.5L440.5 227.8H439.5L439.5 224.2H438.5L438.5 225.5H437.5L437.5 246.5H436.5L436.5 228.6H435.5L435.5 229.2H434.5L434.5 230.7H433.5L433.5 222.6H432.5L432.5 219.8H431.5L431.5 223.0H430.5L430.5 225.8H429.5L429.5 229.0H428.5L428.5 235.9H427.5L427.5 236.7H426.5L426.5 245.4H425.5L425.5 245.0H424.5L424.5 246.5H423.5L423.5 223.2H422.5L422.5 224.8H421.5L421.5 228.7H420.5L420.5 227.5H419.5L419.5 229.7H418.5L418.5 219.8H417.5L417.5 222.4H416.5L416.5 223.5H415.5L415.5 226.6H414.5L414.5 223.1H413.5L413.5 222.8H412.5L412.5 224.0H411.5L411.5 243.1H410.5L410.5 226.6H409.5L409.5 226.5H408.5L408.5 228.2H407.5L407.5 224.7H406.5L406.5 227.9H405.5L405.5 221.9H404.5L404.5 221.8H403.5L403.5 222.8H402.5L402.5 243.8H401.5L401.5 246.5H400.5L400.5 228.0H399.5L399.5 227.4H398.5L398.5 230.3H397.5L397.5 228.2H396.5L396.5 230.0H395.5L395.5 230.1H394.5L394.5 221.6H393.5L393.5 222.2H392.5L392.5 223.5H391.5L391.5 224.3H390.5L390.5 223.8H389.5L389.5 227.0H388.5L388.5 221.6H387.5L387.5 222.9H386.5L386.5 222.5H385.5L385.5 223.4H384.5L384.5 219.0H383.5L383.5 219.9H382.5L382.5 222.2H381.5L381.5 222.7H380.5L380.5 224.7H379.5L379.5 225.5H378.5L378.5 228.9H377.5L377.5 230.7H376.5L376.5 220.1H375.5L375.5 221.1H374.5L374.5 222.8H373.5L373.5 227.4H372.5L372.5 227.2H371.5L371.5 227.7H370.5L370.5 243.4H369.5L369.5 244.4H368.5L368.5 246.5H367.5L367.5 234.7H366.5L366.5 222.2H365.5L365.5 222.7H364.5L364.5 244.4H363.5L363.5 245.5H362.5L362.5 226.6H361.5L361.5 227.1H360.5L360.5 228.0H359.5L359.5 229.3H358.5L358.5 230.3H357.5L357.5 226.1H356.5L356.5 226.8H355.5L355.5 228.7H354.5L354.5 225.1H353.5L353.5 226.0H352.5L352.5 227.6H351.5L351.5 229.3H350.5L350.5 229.7H349.5L349.5 222.2H348.5L348.5 223.5H347.5L347.5 225.8H346.5L346.5 228.8H345.5L345.5 222.5H344.5L344.5 223.4H343.5L343.5 233.5H342.5L342.5 234.4H341.5L341.5 221.9H340.5L340.5 221.6H339.5L339.5 224.1H338.5L338.5 222.2H337.5L337.5 222.3H336.5L336.5 224.1H335.5L335.5 226.8H334.5L334.5 222.9H333.5L333.5 223.5H332.5L332.5 225.0H331.5L331.5 224.6H330.5L330.5 225.7H329.5L329.5 227.2H328.5L328.5 228.7H327.5L327.5 221.9H326.5L326.5 223.1H325.5L325.5 225.3H324.5L324.5 224.0H323.5L323.5 226.7H322.5L322.5 219.8H321.5L321.5 221.8H320.5L320.5 222.4H319.5L319.5 224.0H318.5L318.5 225.7H317.5L317.5 225.3H316.5L316.5 228.4H315.5L315.5 229.2H314.5L314.5 224.0H313.5L313.5 224.5H312.5L312.5 224.1H311.5L311.5 225.4H310.5L310.5 223.5H309.5L309.5 226.8H308.5L308.5 231.3H307.5L307.5 224.2H306.5L306.5 224.5H305.5L305.5 221.9H304.5L304.5 223.2H303.5L303.5 224.1H302.5L302.5 220.4H301.5L301.5 220.3H300.5L300.5 222.5H299.5L299.5 221.6H298.5L298.5 228.5H297.5L297.5 222.8H296.5L296.5 222.6H295.5L295.5 223.0H294.5L294.5 220.0H293.5L293.5 223.0H292.5L292.5 223.2H291.5L291.5 226.4H290.5L290.5 229.0H289.5L289.5 227.2H288.5L288.5 229.5H287.5L287.5 225.9H286.5L286.5 226.5H285.5L285.5 223.2H284.5L284.5 223.4H283.5L283.5 218.9H282.5L282.5 221.2H281.5L281.5 221.6H280.5L280.5 224.7H279.5L279.5 229.0H278.5L278.5 229.1H277.5L277.5 218.2H276.5L276.5 221.3H275.5L275.5 228.9H274.5L274.5 221.4H273.5L273.5 224.0H272.5L272.5 222.2H271.5L271.5 222.3H270.5L270.5 220.8H269.5L269.5 223.2H268.5L268.5 220.3H267.5L267.5 223.5H266.5L266.5 228.1H265.5L265.5 227.3H264.5L264.5 229.1H263.5L263.5 229.7H262.5L262.5 222.5H261.5L261.5 224.0H260.5L260.5 221.0H259.5L259.5 219.2H258.5L258.5 222.3H257.5L257.5 224.0H256.5L256.5 224.4H255.5L255.5 218.9H254.5L254.5 220.4H253.5L253.5 222.1H252.5L252.5 221.6H251.5L251.5 223.9H250.5L250.5 226.9H249.5L249.5 229.1H248.5L248.5 229.2H247.5L247.5 245.7H246.5L246.5 245.5H245.5L245.5 246.5H244.5L244.5 223.0H243.5L243.5 224.0H242.5L242.5 229.5H241.5L241.5 231.9H240.5L240.5 226.3H239.5L239.5 228.9H238.5L238.5 227.9H237.5L237.5 227.2H236.5L236.5 228.7H235.5L235.5 227.0H234.5L234.5 218.8H233.5L233.5 220.6H232.5L232.5 222.0H231.5L231.5 222.1H230.5L230.5 224.4H229.5L229.5 223.6H228.5L228.5 219.1H227.5L227.5 221.0H226.5L226.5 221.0H225.5L225.5 222.8H224.5L224.5 218.5H223.5L223.5 221.5H222.5L222.5 225.8H221.5L221.5 226.6H220.5L220.5 219.1H219.5L219.5 220.6H218.5L218.5 222.7H217.5L217.5 221.6H216.5L216.5 224.7H215.5L215.5 226.7H214.5L214.5 226.8H213.5L213.5 225.4H212.5L212.5 228.9H211.5L211.5 231.1H210.5L210.5 231.4H209.5L209.5 243.4H208.5L208.5 246.5H207.5L207.5 223.2H206.5L206.5 221.7H205.5L205.5 221.7H204.5L204.5 219.9H203.5L203.5 222.0H202.5L202.5 228.0H201.5L201.5 228.7H200.5L200.5 232.6H199.5L199.5 222.3H198.5L198.5 223.9H197.5L197.5 222.0H196.5L196.5 222.2H195.5L195.5 231.9H194.5L194.5 233.9H193.5L193.5 226.7H192.5L192.5 229.2H191.5L191.5 229.9H190.5L190.5 221.5H189.5L189.5 218.7H188.5L188.5 221.8H187.5L187.5 239.1H186.5L186.5 238.4H185.5L185.5 241.2H184.5L184.5 222.2H183.5L183.5 224.4H182.5L182.5 224.9H181.5L181.5 227.6H180.5L180.5 222.6H179.5L179.5 223.0H178.5L178.5 224.6H177.5L177.5 218.9H176.5L176.5 221.4H175.5L175.5 220.7H174.5L174.5 219.5H173.5L173.5 220.3H172.5L172.5 223.1H171.5L171.5 224.1H170.5L170.5 220.0H169.5L169.5 220.0H168.5L168.5 227.3H167.5L167.5 227.3H166.5L166.5 218.0H165.5L165.5 218.8H164.5L164.5 221.2H163.5L163.5 219.0H162.5L162.5 218.6H161.5L161.5 220.3H160.5L160.5 223.6H159.5L159.5 220.1H158.5L158.5 221.0H157.5L157.5 236.6H156.5L156.5 234.0H155.5L155.5 237.2H154.5L154.5 218.8H153.5L153.5 219.9H152.5L152.5 230.3H151.5L151.5 232.2H150.5L150.5 232.4H149.5L149.5 223.3H148.5L148.5 225.0H147.5L147.5 227.4H146.5L146.5 221.3H145.5L145.5 221.2H144.5L144.5 224.5H143.5L143.5 218.4H142.5L142.5 220.0H141.5L141.5 221.4H140.5L140.5 222.6H139.5L139.5 223.1H138.5L138.5 220.5H137.5L137.5 222.0H136.5L136.5 216.8H135.5L135.5 219.7H134.5L134.5 219.3H133.5L133.5 220.6H132.5L132.5 219.5H131.5L131.5 219.5H130.5L130.5 221.2H129.5L129.5 222.6H128.5L128.5 229.5H127.5L127.5 223.6H126.5L126.5 219.7H125.5L125.5 220.1H124.5L124.5 223.4H123.5L123.5 225.7H122.5L122.5 226.2H121.5L121.5 219.4H120.5L120.5 217.9H119.5L119.5 220.9H118.5L118.5 219.3H117.5L117.5 217.1H116.5L116.5 220.0H115.5L115.5 220.2H114.5L114.5 223.4H113.5L113.5 224.4H112.5L112.5 224.5H111.5L111.5 227.2H110.5L110.5 218.0H109.5L109.5 219.5H108.5L108.5 225.3H107.5L107.5 226.9H106.5L106.5 224.7H105.5L105.5 227.7H104.5L104.5 226.4H103.5L103.5 225.9H102.5L102.5 227.1H101.5L101.5 222.5H100.5L100.5 223.9H99.5L99.5 225.1H98.5L98.5 218.0H97.5L97.5 221.2H96.5L96.5 221.5H95.5L95.5 219.7H94.5L94.5 222.9H93.5L93.5 223.0H92.5L92.5 228.2H91.5L91.5 229.1H90.5L90.5 223.3H89.5L89.5 222.6H88.5L88.5 223.7H87.5L87.5 223.0H86.5L86.5 225.5H85.5L85.5 226.7H84.5L84.5 220.8H83.5L83.5 219.9H82.5L82.5 222.2H81.5L81.5 216.7H80.5L80.5 218.5H79.5L79.5 219.6H78.5L78.5 220.2H77.5L77.5 222.2H76.5L76.5 220.7H75.5L75.5 222.9H74.5L74.5 220.0H73.5L73.5 221.5H72.5L72.5 244.7H71.5L71.5 244.8H70.5L70.5 223.1H69.5L69.5 222.2H68.5L68.5 222.5H67.5L67.5 224.0H66.5L66.5 225.2H65.5L65.5 218.1H64.5L64.5 219.5H63.5L63.5 226.0H62.5L62.5 218.5H61.5L61.5 221.1H60.5L60.5 224.9H59.5L59.5 226.3H58.5L58.5 235.2H57.5L57.5 220.8H56.5L56.5 218.5H55.5L55.5 221.3H54.5L54.5 217.9H53.5L53.5 218.1H52.5L52.5 219.9H51.5L51.5 216.6H50.5L50.5 218.6H49.5Z" fill="#10a050" stroke="#10a050" stroke-width=".5" stroke-linejoin="miter"/>
</svg>
<div style="left:15px;top:133px;width:7px;height:7px;background:#10a050;border:1px solid #222;"></div>
<span class="t" style="left:0px;top:130px;font-size:11px;line-height:13px;color:#10a050;width:47px;text-align:right;">-5.0</span>
<span class="t" style="left:0px;top:174px;font-size:11px;line-height:13px;color:#10a050;width:47px;text-align:right;">-45.0</span>
<span class="t" style="left:0px;top:196px;font-size:11px;line-height:13px;color:#10a050;width:47px;text-align:right;">-65.0</span>
<span class="t" style="left:0px;top:218px;font-size:11px;line-height:13px;color:#10a050;width:47px;text-align:right;">-85.0</span>
<span class="t" style="left:0px;top:240px;font-size:11px;line-height:13px;color:#10a050;width:47px;text-align:right;">-105.0</span>
<span class="t" style="left:0px;top:147px;font-size:11px;line-height:13px;color:#10a050;width:47px;text-align:right;">dBm</span>
<div style="left:47px;top:246px;width:7px;height:7px;background:#fff;border:1px solid #000;"></div>
<span class="t" style="left:30.0px;top:254px;font-size:11px;line-height:13px;color:#222;width:40px;text-align:center;">0.0</span>
<span class="t" style="left:147.2px;top:254px;font-size:11px;line-height:13px;color:#222;width:40px;text-align:center;">0.2</span>
<span class="t" style="left:264.4px;top:254px;font-size:11px;line-height:13px;color:#222;width:40px;text-align:center;">0.4</span>
<span class="t" style="left:381.6px;top:254px;font-size:11px;line-height:13px;color:#222;width:40px;text-align:center;">0.6</span>
<span class="t" style="left:498.79999999999995px;top:254px;font-size:11px;line-height:13px;color:#222;width:40px;text-align:center;">0.8</span>
<span class="t" style="left:616.0px;top:254px;font-size:11px;line-height:13px;color:#222;width:40px;text-align:center;">1.0</span>
<span class="t" style="left:733.2px;top:254px;font-size:11px;line-height:13px;color:#222;width:40px;text-align:center;">1.2</span>
<span class="t" style="left:850.4px;top:254px;font-size:11px;line-height:13px;color:#222;width:40px;text-align:center;">1.4</span>
<span class="t" style="left:967.6px;top:254px;font-size:11px;line-height:13px;color:#222;width:40px;text-align:center;">1.6</span>
<span class="t" style="left:1084.8px;top:254px;font-size:11px;line-height:13px;color:#222;width:40px;text-align:center;">1.8</span>
<span class="t" style="left:1202.0px;top:254px;font-size:11px;line-height:13px;color:#222;width:40px;text-align:center;">2.0</span>
<div style="left:16px;top:266px;width:32px;height:12px;background:#7dd0a5;"></div>
<span class="t" style="left:16px;top:266px;font-size:10px;line-height:12px;color:#fff;width:32px;text-align:center;line-height:12px;">x1.0</span>
<span class="t" style="left:52px;top:269px;font-size:11px;line-height:13px;color:#222;">kHz</span>
<div style="left:15px;top:287px;width:1224px;height:14px;background:#9f9f9f;"></div>
<div style="left:15px;top:287px;width:15px;height:60px;background:#9f9f9f;"></div>
<span class="t" style="left:34px;top:289px;font-size:10px;line-height:12px;color:#fff;line-height:12px;">Channel</span>
<div style="left:93px;top:288px;width:1px;height:13px;background:#e8e8e8;"></div>
<span class="t" style="left:98.5px;top:289px;font-size:10px;line-height:12px;color:#fff;line-height:12px;">Name</span>
<div style="left:315px;top:288px;width:1px;height:13px;background:#e8e8e8;"></div>
<span class="t" style="left:320.5px;top:289px;font-size:10px;line-height:12px;color:#fff;line-height:12px;">Value</span>
<div style="left:380px;top:288px;width:1px;height:13px;background:#e8e8e8;"></div>
<span class="t" style="left:385.5px;top:289px;font-size:10px;line-height:12px;color:#fff;line-height:12px;">Min</span>
<div style="left:445px;top:288px;width:1px;height:13px;background:#e8e8e8;"></div>
<span class="t" style="left:450.5px;top:289px;font-size:10px;line-height:12px;color:#fff;line-height:12px;">Max</span>
<div style="left:509px;top:288px;width:1px;height:13px;background:#e8e8e8;"></div>
<span class="t" style="left:514.5px;top:289px;font-size:10px;line-height:12px;color:#fff;line-height:12px;">Average</span>
<div style="left:574px;top:288px;width:1px;height:13px;background:#e8e8e8;"></div>
<span class="t" style="left:579.5px;top:289px;font-size:10px;line-height:12px;color:#fff;line-height:12px;">&#963;</span>
<div style="left:651px;top:288px;width:1px;height:13px;background:#e8e8e8;"></div>
<span class="t" style="left:656.5px;top:289px;font-size:10px;line-height:12px;color:#fff;line-height:12px;">Capture Count</span>
<div style="left:743px;top:288px;width:1px;height:13px;background:#e8e8e8;"></div>
<span class="t" style="left:748.5px;top:289px;font-size:10px;line-height:12px;color:#fff;line-height:12px;">Span</span>
<div style="left:1228px;top:297px;width:4px;height:2px;background:#fff;"></div>
<div style="left:30px;top:301px;width:1209px;height:23px;background:#78a2cc;"></div>
<div style="left:19px;top:309px;width:6px;height:6px;background:#10a050;border:1px solid #1a1a1a;"></div>
<span class="t cell" style="left:35px;top:305px;font-size:14px;line-height:16px;color:#eef3fa;letter-spacing:-0.2px;">C</span>
<div style="left:93px;top:301px;width:1px;height:23px;background:#8e9fb4;"></div>
<span class="t cell" style="left:98px;top:305px;font-size:14px;line-height:16px;color:#eef3fa;letter-spacing:-0.2px;">Frequency at Peak</span>
<div style="left:315px;top:301px;width:1px;height:23px;background:#8e9fb4;"></div>
<span class="t cell" style="left:320px;top:305px;font-size:14px;line-height:16px;color:#eef3fa;letter-spacing:-0.2px;">50.02 Hz</span>
<div style="left:380px;top:301px;width:1px;height:23px;background:#8e9fb4;"></div>
<span class="t cell" style="left:385px;top:305px;font-size:14px;line-height:16px;color:#eef3fa;letter-spacing:-0.2px;">49.99 Hz</span>
<div style="left:445px;top:301px;width:1px;height:23px;background:#8e9fb4;"></div>
<span class="t cell" style="left:450px;top:305px;font-size:14px;line-height:16px;color:#eef3fa;letter-spacing:-0.2px;">50.03 ...</span>
<div style="left:509px;top:301px;width:1px;height:23px;background:#8e9fb4;"></div>
<span class="t cell" style="left:514px;top:305px;font-size:14px;line-height:16px;color:#eef3fa;letter-spacing:-0.2px;">50.01 Hz</span>
<div style="left:574px;top:301px;width:1px;height:23px;background:#8e9fb4;"></div>
<span class="t cell" style="left:579px;top:305px;font-size:14px;line-height:16px;color:#eef3fa;letter-spacing:-0.2px;">0 Hz</span>
<div style="left:651px;top:301px;width:1px;height:23px;background:#8e9fb4;"></div>
<span class="t cell" style="left:656px;top:305px;font-size:14px;line-height:16px;color:#eef3fa;letter-spacing:-0.2px;">20</span>
<div style="left:743px;top:301px;width:1px;height:23px;background:#8e9fb4;"></div>
<span class="t cell" style="left:748px;top:305px;font-size:14px;line-height:16px;color:#eef3fa;letter-spacing:-0.2px;">At Peak</span>
<div style="left:30px;top:324px;width:1209px;height:23px;background:#fff;"></div>
<div style="left:19px;top:332px;width:6px;height:6px;background:#10a050;border:1px solid #1a1a1a;"></div>
<span class="t cell" style="left:35px;top:328px;font-size:14px;line-height:16px;color:#000;letter-spacing:-0.2px;">C</span>
<div style="left:93px;top:324px;width:1px;height:23px;background:#9a9a9a;"></div>
<span class="t cell" style="left:98px;top:328px;font-size:14px;line-height:16px;color:#000;letter-spacing:-0.2px;">Total Harmonic Distortion (THD) %</span>
<div style="left:315px;top:324px;width:1px;height:23px;background:#9a9a9a;"></div>
<span class="t cell" style="left:320px;top:328px;font-size:14px;line-height:16px;color:#000;letter-spacing:-0.2px;">86.08 %</span>
<div style="left:380px;top:324px;width:1px;height:23px;background:#9a9a9a;"></div>
<span class="t cell" style="left:385px;top:328px;font-size:14px;line-height:16px;color:#000;letter-spacing:-0.2px;">83.18 %</span>
<div style="left:445px;top:324px;width:1px;height:23px;background:#9a9a9a;"></div>
<span class="t cell" style="left:450px;top:328px;font-size:14px;line-height:16px;color:#000;letter-spacing:-0.2px;">94.74 %</span>
<div style="left:509px;top:324px;width:1px;height:23px;background:#9a9a9a;"></div>
<span class="t cell" style="left:514px;top:328px;font-size:14px;line-height:16px;color:#000;letter-spacing:-0.2px;">86.53 %</span>
<div style="left:574px;top:324px;width:1px;height:23px;background:#9a9a9a;"></div>
<span class="t cell" style="left:579px;top:328px;font-size:14px;line-height:16px;color:#000;letter-spacing:-0.2px;">3.286 %</span>
<div style="left:651px;top:324px;width:1px;height:23px;background:#9a9a9a;"></div>
<span class="t cell" style="left:656px;top:328px;font-size:14px;line-height:16px;color:#000;letter-spacing:-0.2px;">20</span>
<div style="left:743px;top:324px;width:1px;height:23px;background:#9a9a9a;"></div>
<span class="t cell" style="left:748px;top:328px;font-size:14px;line-height:16px;color:#000;letter-spacing:-0.2px;">Whole trace</span>
<div style="left:9px;top:356px;width:1236px;height:359px;background:#f6f4ef;border:2px solid #000;box-shadow:inset 1px 1px 0 #fff;"></div>
<div style="left:11px;top:379px;width:1229px;height:331px;background:#fff;border:1px solid #8d7767;border-radius:0 3px 3px 3px;box-shadow:1px 1px 0 #dedbd0;"></div>
<div style="left:11px;top:359px;width:68px;height:23px;background:#f6f4ef;border:1px solid #8d7767;border-bottom:none;border-radius:5px 5px 0 0;box-shadow:inset 1px 1px 0 #fff;"></div>
<span class="t" style="left:24px;top:364.5px;font-size:11px;line-height:13px;color:#000;">Scope 1</span>
<svg style="left:0;top:370px" width="1254" height="240" viewBox="0 370 1254 240">
<path d="M85 387.5H1192M85 405.8H1192M85 424.1H1192M85 442.3H1192M85 460.6H1192M85 478.9H1192M85 497.2H1192M85 515.5H1192M85 533.7H1192M85 552.0H1192M85 570.3H1192M340.0 387.5V570.3M482.2 387.5V570.3M624.4 387.5V570.3M766.6 387.5V570.3M908.8 387.5V570.3M1051.0 387.5V570.3M1192.4 387.5V570.3" fill="none" stroke="#aed9e8" stroke-width="1" stroke-dasharray="4 2" shape-rendering="crispEdges"/>
<path d="M85.0 562.2 86.5 562.1 88.0 561.1 89.5 561.5 91.0 560.7 92.5 560.2 94.0 559.6 95.5 558.6 97.0 558.8 98.5 558.4 100.0 557.0 101.5 557.1 103.0 556.7 104.5 557.3 106.0 558.1 107.5 555.3 109.0 552.1 110.5 549.0 112.0 544.2 113.5 532.6 115.0 521.4 116.5 511.6 118.0 504.1 119.5 496.9 121.0 493.9 122.5 495.6 124.0 501.4 125.5 505.9 127.0 512.5 128.5 517.9 130.0 521.1 131.5 527.6 133.0 534.0 134.5 542.0 136.0 549.2 137.5 551.6 139.0 554.3 140.5 555.6 142.0 555.8 143.5 556.6 145.0 558.2 146.5 559.6 148.0 559.5 149.5 559.8 151.0 560.6 152.5 560.7 154.0 561.9 155.5 562.8 157.0 562.5 158.5 562.8 160.0 563.1 161.5 563.1 163.0 562.8 164.5 562.8 166.0 562.2 167.5 562.0 169.0 561.1 170.5 561.4 172.0 561.5 173.5 560.6 175.0 560.7 176.5 561.4 178.0 562.9 179.5 562.6 181.0 563.6 182.5 563.5 184.0 563.3 185.5 563.2 187.0 563.7 188.5 563.7 190.0 563.2 191.5 563.9 193.0 563.6 194.5 563.4 196.0 563.6 197.5 563.3 199.0 563.4 200.5 563.6 202.0 563.3 203.5 563.9 205.0 563.9 206.5 563.4 208.0 563.3 209.5 564.1 211.0 563.7 212.5 564.1 214.0 563.8 215.5 563.6 217.0 563.5 218.5 563.6 220.0 563.7 221.5 563.0 223.0 563.5 224.5 563.6 226.0 563.3 227.5 562.0 229.0 561.9 230.5 561.2 232.0 560.1 233.5 558.8 235.0 558.0 236.5 557.0 238.0 556.9 239.5 556.9 241.0 555.8 242.5 554.8 244.0 553.0 245.5 552.1 247.0 553.3 248.5 553.4 250.0 554.4 251.5 555.0 253.0 554.6 254.5 553.7 256.0 541.4 257.5 528.5 259.0 511.0 260.5 495.9 262.0 485.0 263.5 476.3 265.0 478.5 266.5 486.7 268.0 497.0 269.5 505.0 271.0 513.5 272.5 520.7 274.0 526.1 275.5 532.1 277.0 536.8 278.5 540.7 280.0 545.1 281.5 548.0 283.0 550.3 284.5 553.4 286.0 555.3 287.5 556.6 289.0 557.5 290.5 558.9 292.0 560.2 293.5 560.3 295.0 561.2 296.5 561.6 298.0 562.7 299.5 562.8 301.0 563.5 302.5 563.3 304.0 563.7 305.5 564.1 307.0 564.0 308.5 563.8 310.0 563.8 311.5 563.2 313.0 562.8 314.5 562.7 316.0 562.9 317.5 563.9 319.0 564.4 320.5 564.7 322.0 564.5 323.5 563.6 325.0 563.8 326.5 563.4 328.0 564.3 329.5 563.9 331.0 564.4 332.5 563.8 334.0 564.0 335.5 563.9 337.0 563.8 338.5 563.8 340.0 563.9 341.5 563.8 343.0 563.4 344.5 564.1 346.0 564.1 347.5 564.2 349.0 563.6 350.5 564.2 352.0 564.1 353.5 564.4 355.0 563.9 356.5 564.0 358.0 563.6 359.5 564.5 361.0 564.4 362.5 564.3 364.0 563.3 365.5 562.3 367.0 562.2 368.5 561.9 370.0 562.2 371.5 562.5 373.0 562.0 374.5 561.9 376.0 561.2 377.5 560.7 379.0 559.6 380.5 559.6 382.0 558.3 383.5 558.0 385.0 557.9 386.5 557.3 388.0 557.2 389.5 558.0 391.0 557.4 392.5 554.4 394.0 550.8 395.5 546.9 397.0 540.9 398.5 529.7 400.0 519.1 401.5 510.8 403.0 503.6 404.5 496.5 406.0 496.0 407.5 498.7 409.0 504.5 410.5 510.7 412.0 515.6 413.5 520.3 415.0 525.0 416.5 531.9 418.0 538.9 419.5 545.7 421.0 551.5 422.5 552.8 424.0 554.9 425.5 556.7 427.0 556.8 428.5 557.7 430.0 558.9 431.5 559.0 433.0 559.5 434.5 561.0 436.0 561.3 437.5 561.5 439.0 561.4 440.5 562.2 442.0 562.6 443.5 562.6 445.0 562.7 446.5 562.0 448.0 561.8 449.5 561.8 451.0 561.7 452.5 562.1 454.0 562.3 455.5 563.3 457.0 562.7 458.5 563.3 460.0 562.9 461.5 563.4 463.0 563.7 464.5 563.0 466.0 562.7 467.5 563.2 469.0 563.1 470.5 562.8 472.0 563.9 473.5 563.8 475.0 564.1 476.5 564.7 478.0 564.1 479.5 564.0 481.0 564.3 482.5 564.5 484.0 564.3 485.5 564.1 487.0 564.1 488.5 564.0 490.0 563.9 491.5 564.6 493.0 563.8 494.5 564.1 496.0 563.8 497.5 563.3 499.0 564.3 500.5 564.7 502.0 563.8 503.5 564.0 505.0 563.1 506.5 562.3 508.0 562.5 509.5 561.7 511.0 561.1 512.5 559.6 514.0 558.8 515.5 558.4 517.0 557.9 518.5 557.4 520.0 556.5 521.5 555.5 523.0 554.9 524.5 553.3 526.0 552.1 527.5 552.2 529.0 552.6 530.5 553.0 532.0 553.4 533.5 553.8 535.0 554.1 536.5 545.2 538.0 535.3 539.5 521.2 541.0 507.8 542.5 498.8 544.0 490.4 545.5 493.2 547.0 498.9 548.5 507.3 550.0 514.5 551.5 520.4 553.0 526.7 554.5 531.7 556.0 536.3 557.5 540.5 559.0 544.4 560.5 547.3 562.0 550.9 563.5 552.3 565.0 554.2 566.5 555.8 568.0 557.4 569.5 558.0 571.0 559.2 572.5 560.8 574.0 559.9 575.5 560.9 577.0 560.9 578.5 562.2 580.0 562.6 581.5 563.2 583.0 562.8 584.5 563.3 586.0 563.4 587.5 563.2 589.0 563.0 590.5 563.2 592.0 563.0 593.5 563.5 595.0 563.5 596.5 563.2 598.0 562.9 599.5 563.8 601.0 563.4 602.5 564.2 604.0 564.6 605.5 564.2 607.0 564.4 608.5 564.0 610.0 563.9 611.5 563.4 613.0 563.1 614.5 563.8 616.0 563.3 617.5 563.8 619.0 563.2 620.5 564.3 622.0 564.2 623.5 564.5 625.0 564.7 626.5 563.9 628.0 563.4 629.5 563.1 631.0 564.2 632.5 564.7 634.0 564.3 635.5 564.6 637.0 564.5 638.5 564.8 640.0 564.5 641.5 563.6 643.0 563.6 644.5 562.9 646.0 562.7 647.5 562.0 649.0 562.0 650.5 562.0 652.0 561.6 653.5 561.6 655.0 561.8 656.5 561.3 658.0 560.6 659.5 560.2 661.0 560.4 662.5 560.5 664.0 560.2 665.5 559.0 667.0 558.8 668.5 557.8 670.0 557.1 671.5 558.0 673.0 558.6 674.5 557.9 676.0 555.9 677.5 553.4 679.0 550.9 680.5 547.8 682.0 539.2 683.5 528.8 685.0 519.4 686.5 512.3 688.0 506.5 689.5 502.5 691.0 503.4 692.5 507.0 694.0 511.8 695.5 517.2 697.0 522.9 698.5 526.0 700.0 531.4 701.5 536.9 703.0 542.4 704.5 548.9 706.0 552.3 707.5 554.1 709.0 556.4 710.5 557.7 712.0 557.4 713.5 557.6 715.0 558.5 716.5 559.7 718.0 560.4 719.5 561.3 721.0 561.2 722.5 561.5 724.0 562.1 725.5 562.8 727.0 562.3 728.5 563.2 730.0 563.5 731.5 562.7 733.0 561.8 734.5 562.5 736.0 562.1 737.5 562.5 739.0 562.1 740.5 563.6 742.0 563.0 743.5 563.8 745.0 563.4 746.5 563.3 748.0 563.2 749.5 562.7 751.0 563.1 752.5 563.8 754.0 564.4 755.5 563.4 757.0 563.8 758.5 563.6 760.0 564.4 761.5 564.4 763.0 564.2 764.5 564.8 766.0 564.0 767.5 563.5 769.0 564.2 770.5 563.8 772.0 564.5 773.5 564.1 775.0 563.5 776.5 564.4 778.0 563.8 779.5 563.3 781.0 564.0 782.5 564.2 784.0 563.4 785.5 564.3 787.0 563.8 788.5 563.6 790.0 562.7 791.5 563.3 793.0 563.3 794.5 563.2 796.0 562.4 797.5 561.0 799.0 560.1 800.5 560.1 802.0 558.6 803.5 558.2 805.0 557.0 806.5 557.3 808.0 555.8 809.5 554.3 811.0 554.1 812.5 552.3 814.0 552.8 815.5 552.8 817.0 554.1 818.5 554.6 820.0 554.0 821.5 555.0 823.0 553.6 824.5 544.6 826.0 534.3 827.5 522.0 829.0 513.0 830.5 504.8 832.0 502.1 833.5 504.0 835.0 511.0 836.5 518.4 838.0 523.5 839.5 529.8 841.0 535.1 842.5 538.8 844.0 542.1 845.5 545.3 847.0 548.6 848.5 551.4 850.0 553.1 851.5 555.3 853.0 557.8 854.5 558.9 856.0 560.0 857.5 559.7 859.0 560.8 860.5 560.4 862.0 561.5 863.5 561.6 865.0 562.5 866.5 562.7 868.0 563.3 869.5 563.1 871.0 563.6 872.5 563.9 874.0 564.3 875.5 563.5 877.0 564.0 878.5 564.3 880.0 563.8 881.5 563.8 883.0 563.6 884.5 564.3 886.0 563.6 887.5 563.6 889.0 563.3 890.5 563.4 892.0 563.1 893.5 564.1 895.0 564.4 896.5 564.7 898.0 564.3 899.5 563.6 901.0 563.6 902.5 564.4 904.0 563.7 905.5 564.0 907.0 563.3 908.5 563.0 910.0 563.0 911.5 563.4 913.0 563.6 914.5 564.0 916.0 563.4 917.5 564.0 919.0 563.9 920.5 564.6 922.0 563.6 923.5 563.7 925.0 564.3 926.5 564.0 928.0 564.6 929.5 563.9 931.0 563.7 932.5 563.9 934.0 563.3 935.5 562.4 937.0 562.7 938.5 561.9 940.0 562.0 941.5 561.2 943.0 561.6 944.5 561.1 946.0 560.2 947.5 560.2 949.0 559.6 950.5 558.1 952.0 557.4 953.5 557.5 955.0 557.8 956.5 557.3 958.0 557.5 959.5 557.4 961.0 554.8 962.5 552.6 964.0 549.0 965.5 544.3 967.0 534.3 968.5 525.0 970.0 516.5 971.5 510.1 973.0 503.4 974.5 501.5 976.0 504.0 977.5 509.3 979.0 514.2 980.5 519.5 982.0 523.4 983.5 527.4 985.0 533.5 986.5 540.1 988.0 545.5 989.5 552.4 991.0 554.7 992.5 555.7 994.0 557.0 995.5 557.7 997.0 558.3 998.5 558.7 1000.0 560.0 1001.5 560.6 1003.0 561.7 1004.5 560.9 1006.0 561.4 1007.5 562.3 1009.0 562.4 1010.5 563.0 1012.0 562.7 1013.5 563.3 1015.0 562.7 1016.5 562.7 1018.0 562.7 1019.5 562.2 1021.0 562.1 1022.5 562.2 1024.0 563.3 1025.5 563.2 1027.0 562.7 1028.5 563.0 1030.0 563.1 1031.5 562.7 1033.0 563.6 1034.5 563.4 1036.0 562.8 1037.5 563.0 1039.0 562.8 1040.5 563.3 1042.0 563.3 1043.5 563.3 1045.0 563.7 1046.5 563.4 1048.0 564.1 1049.5 564.6 1051.0 564.6 1052.5 563.9 1054.0 564.6 1055.5 564.7 1057.0 564.6 1058.5 564.3 1060.0 564.7 1061.5 564.3 1063.0 564.1 1064.5 563.7 1066.0 564.0 1067.5 563.3 1069.0 563.9 1070.5 564.3 1072.0 564.8 1073.5 564.7 1075.0 563.3 1076.5 563.3 1078.0 562.3 1079.5 562.7 1081.0 562.0 1082.5 560.9 1084.0 560.8 1085.5 559.6 1087.0 559.2 1088.5 558.0 1090.0 556.9 1091.5 556.4 1093.0 556.7 1094.5 555.1 1096.0 553.2 1097.5 552.7 1099.0 551.5 1100.5 552.2 1102.0 552.5 1103.5 553.4 1105.0 554.0 1106.5 554.3 1108.0 554.3 1109.5 545.3 1111.0 535.4 1112.5 523.5 1114.0 513.4 1115.5 505.6 1117.0 500.7 1118.5 502.3 1120.0 509.9 1121.5 517.9 1123.0 523.8 1124.5 528.9 1126.0 533.2 1127.5 537.6 1129.0 542.3 1130.5 545.6 1132.0 547.8 1133.5 550.5 1135.0 553.4 1136.5 555.2 1138.0 556.7 1139.5 557.8 1141.0 558.7 1142.5 559.8 1144.0 561.0 1145.5 560.6 1147.0 560.8 1148.5 561.0 1150.0 561.8 1151.5 563.0 1153.0 563.8 1154.5 563.0 1156.0 563.1 1157.5 563.2 1159.0 562.7 1160.5 563.1 1162.0 562.6 1163.5 563.3 1165.0 563.4 1166.5 563.6 1168.0 563.7 1169.5 563.1 1171.0 563.9 1172.5 563.9 1174.0 563.8 1175.5 564.2 1177.0 564.1 1178.5 563.8 1180.0 563.5 1181.5 563.9 1183.0 563.5 1184.5 563.3 1186.0 563.3 1187.5 563.7 1189.0 563.8" fill="none" stroke="#000" stroke-width="1.900" stroke-linejoin="round"/>
<path d="M85.0 466.6 86.5 466.2 88.0 466.5 89.5 465.1 91.0 464.8 92.5 465.7 94.0 465.7 95.5 465.0 97.0 464.4 98.5 463.5 100.0 463.1 101.5 463.2 103.0 462.8 104.5 463.9 106.0 464.5 107.5 465.0 109.0 461.9 110.5 458.3 112.0 455.4 113.5 446.7 115.0 440.4 116.5 433.5 118.0 427.4 119.5 421.1 121.0 418.6 122.5 420.0 124.0 423.9 125.5 429.8 127.0 435.7 128.5 440.9 130.0 445.5 131.5 450.2 133.0 453.6 134.5 458.7 136.0 460.9 137.5 463.2 139.0 465.3 140.5 468.5 142.0 468.9 143.5 469.6 145.0 470.5 146.5 470.3 148.0 470.0 149.5 470.6 151.0 470.2 152.5 471.0 154.0 470.4 155.5 470.8 157.0 472.4 158.5 472.6 160.0 473.3 161.5 473.2 163.0 473.9 164.5 473.2 166.0 472.2 167.5 473.2 169.0 472.9 170.5 472.3 172.0 469.3 173.5 466.2 175.0 462.9 176.5 465.5 178.0 469.5 179.5 471.4 181.0 472.2 182.5 471.8 184.0 472.3 185.5 472.2 187.0 472.2 188.5 472.1 190.0 473.1 191.5 473.1 193.0 472.4 194.5 472.9 196.0 471.9 197.5 472.2 199.0 471.6 200.5 472.2 202.0 472.6 203.5 471.6 205.0 472.1 206.5 471.3 208.0 471.6 209.5 472.6 211.0 471.9 212.5 473.0 214.0 473.7 215.5 472.8 217.0 474.0 218.5 473.8 220.0 474.1 221.5 475.5 223.0 474.4 224.5 475.9 226.0 476.0 227.5 477.3 229.0 477.8 230.5 478.1 232.0 477.7 233.5 477.5 235.0 478.3 236.5 479.5 238.0 480.6 239.5 481.4 241.0 482.1 242.5 480.7 244.0 480.4 245.5 481.3 247.0 480.1 248.5 479.4 250.0 477.7 251.5 478.3 253.0 478.8 254.5 481.0 256.0 489.3 257.5 500.1 259.0 513.1 260.5 525.0 262.0 532.2 263.5 538.3 265.0 531.4 266.5 525.2 268.0 516.7 269.5 508.7 271.0 504.1 272.5 498.6 274.0 494.0 275.5 489.8 277.0 487.6 278.5 484.4 280.0 481.2 281.5 480.7 283.0 478.7 284.5 477.7 286.0 477.5 287.5 476.9 289.0 475.3 290.5 474.1 292.0 473.1 293.5 472.3 295.0 471.6 296.5 470.0 298.0 469.4 299.5 469.9 301.0 470.2 302.5 469.1 304.0 468.1 305.5 468.7 307.0 469.3 308.5 469.5 310.0 468.2 311.5 467.1 313.0 468.2 314.5 467.3 316.0 468.5 317.5 467.2 319.0 466.7 320.5 467.6 322.0 468.9 323.5 469.4 325.0 469.7 326.5 469.8 328.0 470.0 329.5 468.7 331.0 469.1 332.5 468.7 334.0 468.5 335.5 469.5 337.0 469.4 338.5 469.3 340.0 468.8 341.5 470.3 343.0 470.6 344.5 470.6 346.0 470.6 347.5 470.1 349.0 470.7 350.5 469.3 352.0 470.2 353.5 469.7 355.0 468.8 356.5 468.2 358.0 468.1 359.5 468.9 361.0 468.3 362.5 468.0 364.0 468.1 365.5 467.3 367.0 467.2 368.5 466.4 370.0 466.1 371.5 465.5 373.0 465.7 374.5 465.7 376.0 466.2 377.5 465.4 379.0 465.6 380.5 465.1 382.0 464.1 383.5 462.7 385.0 462.6 386.5 463.5 388.0 462.8 389.5 462.6 391.0 464.1 392.5 463.4 394.0 459.8 395.5 457.3 397.0 451.2 398.5 443.8 400.0 437.1 401.5 430.2 403.0 424.9 404.5 419.1 406.0 420.6 407.5 421.6 409.0 426.2 410.5 431.3 412.0 437.5 413.5 443.1 415.0 447.9 416.5 451.3 418.0 455.9 419.5 459.5 421.0 463.2 422.5 465.3 424.0 467.3 425.5 468.9 427.0 469.2 428.5 469.6 430.0 469.0 431.5 469.9 433.0 471.1 434.5 470.7 436.0 471.2 437.5 471.7 439.0 471.5 440.5 470.9 442.0 472.3 443.5 473.2 445.0 472.8 446.5 473.5 448.0 473.1 449.5 473.4 451.0 472.6 452.5 472.5 454.0 471.9 455.5 471.0 457.0 470.5 458.5 471.7 460.0 471.1 461.5 471.3 463.0 472.3 464.5 472.4 466.0 472.2 467.5 472.4 469.0 471.9 470.5 472.9 472.0 473.6 473.5 474.4 475.0 474.0 476.5 473.7 478.0 473.5 479.5 473.7 481.0 473.2 482.5 471.5 484.0 471.8 485.5 471.7 487.0 470.7 488.5 469.8 490.0 470.5 491.5 471.2 493.0 472.4 494.5 473.1 496.0 471.9 497.5 471.8 499.0 472.5 500.5 472.6 502.0 473.7 503.5 474.8 505.0 476.8 506.5 477.2 508.0 477.7 509.5 478.3 511.0 478.6 512.5 477.5 514.0 477.0 515.5 477.1 517.0 478.5 518.5 478.9 520.0 479.1 521.5 480.3 523.0 480.0 524.5 481.2 526.0 481.3 527.5 480.5 529.0 478.4 530.5 478.3 532.0 478.4 533.5 478.6 535.0 479.4 536.5 486.3 538.0 493.5 539.5 503.4 541.0 514.3 542.5 522.2 544.0 529.1 545.5 522.5 547.0 516.6 548.5 511.0 550.0 505.5 551.5 499.4 553.0 496.7 554.5 493.6 556.0 490.7 557.5 487.4 559.0 485.8 560.5 482.9 562.0 481.7 563.5 480.5 565.0 478.1 566.5 476.4 568.0 474.7 569.5 475.1 571.0 475.0 572.5 474.5 574.0 474.2 575.5 472.4 577.0 472.3 578.5 470.6 580.0 468.9 581.5 468.2 583.0 469.4 584.5 469.6 586.0 470.0 587.5 470.3 589.0 469.4 590.5 469.6 592.0 468.6 593.5 469.0 595.0 469.1 596.5 468.7 598.0 468.9 599.5 468.4 601.0 468.6 602.5 467.9 604.0 468.5 605.5 469.4 607.0 470.0 608.5 469.2 610.0 468.3 611.5 469.7 613.0 469.7 614.5 468.7 616.0 468.6 617.5 468.3 619.0 469.2 620.5 469.0 622.0 468.8 623.5 469.0 625.0 469.5 626.5 469.6 628.0 468.9 629.5 469.8 631.0 468.6 632.5 468.2 634.0 467.7 635.5 467.7 637.0 468.5 638.5 469.3 640.0 468.8 641.5 468.6 643.0 469.2 644.5 469.3 646.0 468.7 647.5 468.6 649.0 467.6 650.5 466.3 652.0 467.2 653.5 467.2 655.0 466.9 656.5 467.9 658.0 467.1 659.5 466.1 661.0 466.7 662.5 466.7 664.0 465.9 665.5 465.1 667.0 465.3 668.5 465.2 670.0 464.7 671.5 465.5 673.0 464.6 674.5 463.9 676.0 464.9 677.5 463.4 679.0 459.3 680.5 456.1 682.0 450.0 683.5 444.3 685.0 437.1 686.5 432.2 688.0 426.6 689.5 424.0 691.0 426.0 692.5 427.4 694.0 432.2 695.5 437.4 697.0 441.5 698.5 445.5 700.0 450.7 701.5 454.1 703.0 458.8 704.5 461.2 706.0 463.6 707.5 464.9 709.0 468.0 710.5 469.6 712.0 470.5 713.5 469.5 715.0 469.6 716.5 468.9 718.0 468.8 719.5 469.2 721.0 469.9 722.5 469.7 724.0 471.0 725.5 472.6 727.0 472.2 728.5 473.3 730.0 473.2 731.5 473.1 733.0 472.1 734.5 472.5 736.0 473.3 737.5 473.1 739.0 473.3 740.5 472.5 742.0 471.6 743.5 472.2 745.0 472.2 746.5 471.8 748.0 472.5 749.5 473.5 751.0 472.7 752.5 472.4 754.0 473.3 755.5 473.4 757.0 473.4 758.5 473.3 760.0 473.5 761.5 472.2 763.0 471.9 764.5 472.8 766.0 472.7 767.5 473.2 769.0 472.2 770.5 471.4 772.0 472.2 773.5 471.2 775.0 470.8 776.5 470.7 778.0 470.4 779.5 470.6 781.0 471.5 782.5 472.9 784.0 473.8 785.5 473.4 787.0 472.8 788.5 473.6 790.0 474.5 791.5 474.5 793.0 474.4 794.5 474.5 796.0 475.9 797.5 475.7 799.0 477.1 800.5 476.9 802.0 478.5 803.5 479.8 805.0 479.5 806.5 479.5 808.0 479.5 809.5 479.3 811.0 479.9 812.5 479.8 814.0 481.1 815.5 481.1 817.0 479.2 818.5 478.3 820.0 478.5 821.5 479.1 823.0 483.8 824.5 489.5 826.0 496.4 827.5 505.5 829.0 512.5 830.5 518.6 832.0 520.0 833.5 514.0 835.0 508.4 836.5 504.7 838.0 500.2 839.5 495.2 841.0 493.0 842.5 490.3 844.0 488.1 845.5 486.0 847.0 483.2 848.5 481.2 850.0 480.0 851.5 478.7 853.0 478.9 854.5 478.2 856.0 476.1 857.5 474.3 859.0 473.4 860.5 472.4 862.0 471.4 863.5 470.8 865.0 470.4 866.5 470.8 868.0 469.6 869.5 468.2 871.0 469.2 872.5 468.0 874.0 468.0 875.5 467.9 877.0 468.2 878.5 468.1 880.0 468.7 881.5 468.1 883.0 467.9 884.5 468.3 886.0 468.4 887.5 467.6 889.0 468.0 890.5 467.3 892.0 467.3 893.5 468.0 895.0 468.4 896.5 469.4 898.0 470.2 899.5 470.3 901.0 470.8 902.5 470.3 904.0 469.6 905.5 470.5 907.0 469.4 908.5 469.4 910.0 470.3 911.5 469.6 913.0 469.6 914.5 469.9 916.0 469.6 917.5 470.6 919.0 469.2 920.5 469.8 922.0 468.6 923.5 468.8 925.0 469.7 926.5 469.1 928.0 469.2 929.5 468.2 931.0 467.2 932.5 466.4 934.0 466.8 935.5 466.0 937.0 466.3 938.5 466.8 940.0 467.9 941.5 467.4 943.0 466.5 944.5 465.4 946.0 465.5 947.5 465.7 949.0 465.8 950.5 464.2 952.0 463.5 953.5 462.4 955.0 462.1 956.5 463.8 958.0 465.0 959.5 464.3 961.0 463.7 962.5 461.0 964.0 459.1 965.5 454.9 967.0 447.6 968.5 440.7 970.0 435.0 971.5 429.7 973.0 425.1 974.5 424.7 976.0 425.9 977.5 428.9 979.0 434.1 980.5 439.2 982.0 443.4 983.5 448.4 985.0 452.2 986.5 455.5 988.0 460.0 989.5 463.4 991.0 464.8 992.5 466.9 994.0 468.9 995.5 469.5 997.0 468.6 998.5 469.9 1000.0 470.1 1001.5 470.1 1003.0 470.6 1004.5 470.3 1006.0 471.4 1007.5 471.2 1009.0 472.6 1010.5 473.7 1012.0 474.1 1013.5 472.8 1015.0 473.3 1016.5 472.9 1018.0 472.2 1019.5 472.3 1021.0 471.4 1022.5 471.2 1024.0 470.7 1025.5 470.6 1027.0 471.3 1028.5 470.6 1030.0 470.5 1031.5 470.4 1033.0 471.1 1034.5 472.5 1036.0 472.3 1037.5 471.9 1039.0 473.2 1040.5 474.1 1042.0 473.5 1043.5 474.4 1045.0 473.8 1046.5 472.5 1048.0 473.4 1049.5 473.3 1051.0 471.8 1052.5 472.2 1054.0 471.8 1055.5 471.1 1057.0 470.3 1058.5 469.9 1060.0 470.4 1061.5 471.6 1063.0 472.3 1064.5 473.1 1066.0 473.1 1067.5 472.9 1069.0 472.5 1070.5 472.5 1072.0 473.3 1073.5 474.7 1075.0 474.7 1076.5 475.2 1078.0 476.5 1079.5 475.8 1081.0 476.8 1082.5 477.5 1084.0 477.7 1085.5 478.2 1087.0 477.6 1088.5 479.1 1090.0 478.2 1091.5 479.6 1093.0 479.9 1094.5 480.6 1096.0 481.3 1097.5 481.1 1099.0 480.4 1100.5 479.7 1102.0 479.8 1103.5 479.1 1105.0 480.1 1106.5 480.7 1108.0 482.8 1109.5 489.3 1111.0 495.1 1112.5 502.4 1114.0 510.3 1115.5 516.2 1117.0 517.4 1118.5 512.9 1120.0 508.7 1121.5 504.6 1123.0 499.9 1124.5 496.1 1126.0 492.6 1127.5 490.4 1129.0 486.7 1130.5 485.4 1132.0 483.5 1133.5 483.0 1135.0 481.1 1136.5 478.9 1138.0 478.0 1139.5 477.9 1141.0 475.3 1142.5 473.3 1144.0 473.7 1145.5 472.0 1147.0 471.2 1148.5 470.4 1150.0 469.3 1151.5 468.2 1153.0 467.2 1154.5 467.0 1156.0 468.3 1157.5 469.0 1159.0 469.1 1160.5 469.3 1162.0 470.0 1163.5 468.4 1165.0 469.3 1166.5 469.3 1168.0 468.6 1169.5 468.6 1171.0 468.0 1172.5 467.4 1174.0 467.1 1175.5 468.0 1177.0 469.2 1178.5 468.4 1180.0 467.6 1181.5 468.4 1183.0 468.1 1184.5 467.7 1186.0 468.4 1187.5 469.7 1189.0 469.4" fill="none" stroke="#10a050" stroke-width="1.900" stroke-linejoin="round"/>
<path d="M85.0 505.9 86.5 507.7 88.0 509.5 89.5 511.2 91.0 512.9 92.5 514.6 94.0 516.3 95.5 517.9 97.0 519.4 98.5 520.9 100.0 522.4 101.5 523.9 103.0 525.3 104.5 526.6 106.0 528.0 107.5 529.2 109.0 530.4 110.5 531.5 112.0 532.5 113.5 533.3 115.0 534.1 116.5 534.8 118.0 535.3 119.5 535.7 121.0 536.0 122.5 536.3 124.0 536.5 125.5 536.6 127.0 536.7 128.5 536.7 130.0 536.7 131.5 536.6 133.0 536.5 134.5 536.3 136.0 536.0 137.5 535.7 139.0 535.2 140.5 534.7 142.0 534.0 143.5 533.2 145.0 532.3 146.5 531.4 148.0 530.3 149.5 529.1 151.0 527.8 152.5 526.5 154.0 525.1 155.5 523.7 157.0 522.2 158.5 520.7 160.0 519.2 161.5 517.6 163.0 516.0 164.5 514.4 166.0 512.7 167.5 511.0 169.0 509.3 170.5 507.5 172.0 505.7 173.5 503.9 175.0 502.0 176.5 500.1 178.0 498.2 179.5 496.3 181.0 494.4 182.5 492.4 184.0 490.5 185.5 488.5 187.0 486.5 188.5 484.5 190.0 482.5 191.5 480.5 193.0 478.5 194.5 476.5 196.0 474.4 197.5 472.4 199.0 470.4 200.5 468.4 202.0 466.4 203.5 464.4 205.0 462.4 206.5 460.4 208.0 458.5 209.5 456.5 211.0 454.6 212.5 452.7 214.0 450.8 215.5 448.9 217.0 447.0 218.5 445.2 220.0 443.4 221.5 441.6 223.0 439.8 224.5 438.1 226.0 436.4 227.5 434.7 229.0 433.1 230.5 431.5 232.0 429.9 233.5 428.4 235.0 426.9 236.5 425.4 238.0 424.0 239.5 422.6 241.0 421.3 242.5 420.0 244.0 418.7 245.5 417.5 247.0 416.3 248.5 415.2 250.0 414.1 251.5 413.1 253.0 412.2 254.5 411.3 256.0 410.6 257.5 410.0 259.0 409.4 260.5 409.0 262.0 408.6 263.5 408.4 265.0 408.2 266.5 408.0 268.0 407.9 269.5 407.9 271.0 407.9 272.5 407.9 274.0 408.0 275.5 408.1 277.0 408.3 278.5 408.5 280.0 408.8 281.5 409.2 283.0 409.7 284.5 410.3 286.0 411.0 287.5 411.8 289.0 412.6 290.5 413.6 292.0 414.7 293.5 415.8 295.0 416.9 296.5 418.2 298.0 419.4 299.5 420.7 301.0 422.0 302.5 423.4 304.0 424.8 305.5 426.2 307.0 427.7 308.5 429.2 310.0 430.8 311.5 432.4 313.0 434.0 314.5 435.6 316.0 437.3 317.5 439.0 319.0 440.8 320.5 442.5 322.0 444.3 323.5 446.2 325.0 448.0 326.5 449.9 328.0 451.8 329.5 453.7 331.0 455.6 332.5 457.5 334.0 459.5 335.5 461.5 337.0 463.5 338.5 465.5 340.0 467.5 341.5 469.5 343.0 471.5 344.5 473.5 346.0 475.5 347.5 477.5 349.0 479.6 350.5 481.6 352.0 483.6 353.5 485.6 355.0 487.6 356.5 489.6 358.0 491.5 359.5 493.5 361.0 495.4 362.5 497.4 364.0 499.3 365.5 501.1 367.0 503.0 368.5 504.8 370.0 506.7 371.5 508.4 373.0 510.2 374.5 511.9 376.0 513.6 377.5 515.3 379.0 516.9 380.5 518.5 382.0 520.0 383.5 521.5 385.0 523.0 386.5 524.4 388.0 525.8 389.5 527.2 391.0 528.5 392.5 529.7 394.0 530.9 395.5 531.9 397.0 532.8 398.5 533.7 400.0 534.4 401.5 535.0 403.0 535.5 404.5 535.9 406.0 536.2 407.5 536.4 409.0 536.5 410.5 536.7 412.0 536.7 413.5 536.7 415.0 536.7 416.5 536.5 418.0 536.4 419.5 536.2 421.0 535.9 422.5 535.5 424.0 535.0 425.5 534.4 427.0 533.7 428.5 532.9 430.0 532.0 431.5 530.9 433.0 529.8 434.5 528.5 436.0 527.3 437.5 525.9 439.0 524.5 440.5 523.1 442.0 521.6 443.5 520.1 445.0 518.6 446.5 517.0 448.0 515.4 449.5 513.7 451.0 512.0 452.5 510.3 454.0 508.6 455.5 506.8 457.0 505.0 458.5 503.1 460.0 501.3 461.5 499.4 463.0 497.5 464.5 495.6 466.0 493.6 467.5 491.7 469.0 489.7 470.5 487.7 472.0 485.7 473.5 483.7 475.0 481.7 476.5 479.7 478.0 477.7 479.5 475.7 481.0 473.6 482.5 471.6 484.0 469.6 485.5 467.6 487.0 465.6 488.5 463.6 490.0 461.6 491.5 459.6 493.0 457.7 494.5 455.7 496.0 453.8 497.5 451.9 499.0 450.0 500.5 448.1 502.0 446.3 503.5 444.5 505.0 442.7 506.5 440.9 508.0 439.1 509.5 437.4 511.0 435.7 512.5 434.1 514.0 432.5 515.5 430.9 517.0 429.3 518.5 427.8 520.0 426.3 521.5 424.9 523.0 423.5 524.5 422.1 526.0 420.8 527.5 419.5 529.0 418.2 530.5 417.0 532.0 415.9 533.5 414.7 535.0 413.7 536.5 412.7 538.0 411.8 539.5 411.0 541.0 410.3 542.5 409.7 544.0 409.2 545.5 408.8 547.0 408.5 548.5 408.3 550.0 408.1 551.5 408.0 553.0 407.9 554.5 407.9 556.0 407.9 557.5 407.9 559.0 408.0 560.5 408.2 562.0 408.4 563.5 408.6 565.0 409.0 566.5 409.4 568.0 409.9 569.5 410.6 571.0 411.3 572.5 412.1 574.0 413.0 575.5 414.0 577.0 415.1 578.5 416.2 580.0 417.4 581.5 418.6 583.0 419.9 584.5 421.2 586.0 422.5 587.5 423.9 589.0 425.3 590.5 426.8 592.0 428.3 593.5 429.8 595.0 431.4 596.5 433.0 598.0 434.6 599.5 436.3 601.0 438.0 602.5 439.7 604.0 441.5 605.5 443.3 607.0 445.1 608.5 446.9 610.0 448.8 611.5 450.6 613.0 452.5 614.5 454.4 616.0 456.4 617.5 458.3 619.0 460.3 620.5 462.3 622.0 464.3 623.5 466.3 625.0 468.3 626.5 470.3 628.0 472.3 629.5 474.3 631.0 476.3 632.5 478.3 634.0 480.4 635.5 482.4 637.0 484.4 638.5 486.4 640.0 488.4 641.5 490.3 643.0 492.3 644.5 494.3 646.0 496.2 647.5 498.1 649.0 500.0 650.5 501.9 652.0 503.7 653.5 505.6 655.0 507.4 656.5 509.1 658.0 510.9 659.5 512.6 661.0 514.3 662.5 515.9 664.0 517.5 665.5 519.1 667.0 520.6 668.5 522.1 670.0 523.6 671.5 525.0 673.0 526.4 674.5 527.7 676.0 529.0 677.5 530.2 679.0 531.3 680.5 532.3 682.0 533.2 683.5 534.0 685.0 534.6 686.5 535.2 688.0 535.6 689.5 536.0 691.0 536.2 692.5 536.4 694.0 536.6 695.5 536.7 697.0 536.7 698.5 536.7 700.0 536.6 701.5 536.5 703.0 536.3 704.5 536.1 706.0 535.8 707.5 535.3 709.0 534.8 710.5 534.1 712.0 533.4 713.5 532.5 715.0 531.6 716.5 530.5 718.0 529.3 719.5 528.0 721.0 526.7 722.5 525.4 724.0 524.0 725.5 522.5 727.0 521.0 728.5 519.5 730.0 518.0 731.5 516.4 733.0 514.7 734.5 513.1 736.0 511.4 737.5 509.6 739.0 507.9 740.5 506.1 742.0 504.2 743.5 502.4 745.0 500.5 746.5 498.6 748.0 496.7 749.5 494.8 751.0 492.8 752.5 490.9 754.0 488.9 755.5 486.9 757.0 484.9 758.5 482.9 760.0 480.9 761.5 478.9 763.0 476.9 764.5 474.8 766.0 472.8 767.5 470.8 769.0 468.8 770.5 466.8 772.0 464.8 773.5 462.8 775.0 460.8 776.5 458.8 778.0 456.9 779.5 455.0 781.0 453.0 782.5 451.1 784.0 449.3 785.5 447.4 787.0 445.6 788.5 443.7 790.0 441.9 791.5 440.2 793.0 438.5 794.5 436.7 796.0 435.1 797.5 433.4 799.0 431.8 800.5 430.2 802.0 428.7 803.5 427.2 805.0 425.7 806.5 424.3 808.0 422.9 809.5 421.6 811.0 420.2 812.5 419.0 814.0 417.7 815.5 416.6 817.0 415.4 818.5 414.3 820.0 413.3 821.5 412.3 823.0 411.5 824.5 410.8 826.0 410.1 827.5 409.5 829.0 409.1 830.5 408.7 832.0 408.4 833.5 408.2 835.0 408.1 836.5 407.9 838.0 407.9 839.5 407.9 841.0 407.9 842.5 408.0 844.0 408.1 845.5 408.2 847.0 408.5 848.5 408.7 850.0 409.1 851.5 409.6 853.0 410.2 854.5 410.8 856.0 411.6 857.5 412.5 859.0 413.4 860.5 414.5 862.0 415.6 863.5 416.7 865.0 417.9 866.5 419.1 868.0 420.4 869.5 421.7 871.0 423.1 872.5 424.5 874.0 425.9 875.5 427.4 877.0 428.9 878.5 430.5 880.0 432.0 881.5 433.6 883.0 435.3 884.5 437.0 886.0 438.7 887.5 440.4 889.0 442.2 890.5 444.0 892.0 445.8 893.5 447.6 895.0 449.5 896.5 451.4 898.0 453.3 899.5 455.2 901.0 457.2 902.5 459.1 904.0 461.1 905.5 463.1 907.0 465.1 908.5 467.1 910.0 469.1 911.5 471.1 913.0 473.1 914.5 475.1 916.0 477.1 917.5 479.2 919.0 481.2 920.5 483.2 922.0 485.2 923.5 487.2 925.0 489.2 926.5 491.1 928.0 493.1 929.5 495.0 931.0 497.0 932.5 498.9 934.0 500.8 935.5 502.6 937.0 504.5 938.5 506.3 940.0 508.1 941.5 509.9 943.0 511.6 944.5 513.3 946.0 514.9 947.5 516.6 949.0 518.2 950.5 519.7 952.0 521.2 953.5 522.7 955.0 524.2 956.5 525.6 958.0 526.9 959.5 528.2 961.0 529.5 962.5 530.6 964.0 531.7 965.5 532.7 967.0 533.5 968.5 534.2 970.0 534.9 971.5 535.4 973.0 535.8 974.5 536.1 976.0 536.3 977.5 536.5 979.0 536.6 980.5 536.7 982.0 536.7 983.5 536.7 985.0 536.6 986.5 536.4 988.0 536.2 989.5 536.0 991.0 535.6 992.5 535.1 994.0 534.5 995.5 533.9 997.0 533.1 998.5 532.2 1000.0 531.1 1001.5 530.0 1003.0 528.8 1004.5 527.5 1006.0 526.2 1007.5 524.8 1009.0 523.4 1010.5 521.9 1012.0 520.4 1013.5 518.9 1015.0 517.3 1016.5 515.7 1018.0 514.1 1019.5 512.4 1021.0 510.7 1022.5 508.9 1024.0 507.1 1025.5 505.3 1027.0 503.5 1028.5 501.6 1030.0 499.8 1031.5 497.9 1033.0 495.9 1034.5 494.0 1036.0 492.1 1037.5 490.1 1039.0 488.1 1040.5 486.1 1042.0 484.1 1043.5 482.1 1045.0 480.1 1046.5 478.1 1048.0 476.1 1049.5 474.0 1051.0 472.0 1052.5 470.0 1054.0 468.0 1055.5 466.0 1057.0 464.0 1058.5 462.0 1060.0 460.0 1061.5 458.1 1063.0 456.1 1064.5 454.2 1066.0 452.3 1067.5 450.4 1069.0 448.5 1070.5 446.7 1072.0 444.8 1073.5 443.0 1075.0 441.2 1076.5 439.5 1078.0 437.8 1079.5 436.1 1081.0 434.4 1082.5 432.8 1084.0 431.2 1085.5 429.6 1087.0 428.1 1088.5 426.6 1090.0 425.2 1091.5 423.7 1093.0 422.4 1094.5 421.0 1096.0 419.7 1097.5 418.5 1099.0 417.3 1100.5 416.1 1102.0 415.0 1103.5 413.9 1105.0 412.9 1106.5 412.0 1108.0 411.2 1109.5 410.5 1111.0 409.9 1112.5 409.3 1114.0 408.9 1115.5 408.6 1117.0 408.3 1118.5 408.1 1120.0 408.0 1121.5 407.9 1123.0 407.9 1124.5 407.9 1126.0 407.9 1127.5 408.0 1129.0 408.1 1130.5 408.3 1132.0 408.6 1133.5 408.9 1135.0 409.3 1136.5 409.8 1138.0 410.4 1139.5 411.1 1141.0 411.9 1142.5 412.8 1144.0 413.8 1145.5 414.9 1147.0 416.0 1148.5 417.2 1150.0 418.4 1151.5 419.6 1153.0 420.9 1154.5 422.3 1156.0 423.6 1157.5 425.1 1159.0 426.5 1160.5 428.0 1162.0 429.5 1163.5 431.1 1165.0 432.7 1166.5 434.3 1168.0 436.0 1169.5 437.7 1171.0 439.4 1172.5 441.1 1174.0 442.9 1175.5 444.7 1177.0 446.5 1178.5 448.4 1180.0 450.3 1181.5 452.1 1183.0 454.1 1184.5 456.0 1186.0 457.9 1187.5 459.9 1189.0 461.9" fill="none" stroke="#0808f0" stroke-width="2.200" stroke-linejoin="round"/>
<path d="M1186 472l4-4.500 4 4.500-4 4.500z" fill="#f0e020" stroke="#a09000" stroke-width=".6"/>
<circle cx="1188" cy="572" r="5" fill="#0c7d86" stroke="#064a50" stroke-width="1"/>
</svg>
<div style="left:15px;top:384px;width:7px;height:7px;background:#0808f0;border:1px solid #113;"></div>
<div style="left:50px;top:384px;width:7px;height:7px;background:#000;"></div>
<span class="t" style="left:21.5px;top:381px;font-size:11px;line-height:13px;color:#0808f0;letter-spacing:-.5px;">438.5</span>
<span class="t" style="left:56px;top:381px;font-size:11px;line-height:13px;color:#000;letter-spacing:-.5px;">229.4</span>
<span class="t" style="left:39px;top:398px;font-size:11px;line-height:13px;color:#0808f0;">V</span>
<span class="t" style="left:73px;top:398px;font-size:11px;line-height:13px;color:#000;">W</span>
<span class="t" style="left:0px;top:435.03999999999996px;font-size:11px;line-height:13px;color:#0808f0;width:47px;text-align:right;letter-spacing:-.3px;">157.0</span>
<span class="t" style="left:40px;top:435.03999999999996px;font-size:11px;line-height:13px;color:#000;width:42px;text-align:right;letter-spacing:-.3px;">159.0</span>
<span class="t" style="left:0px;top:453.32px;font-size:11px;line-height:13px;color:#0808f0;width:47px;text-align:right;letter-spacing:-.3px;">63.11</span>
<span class="t" style="left:40px;top:453.32px;font-size:11px;line-height:13px;color:#000;width:42px;text-align:right;letter-spacing:-.3px;">135.6</span>
<span class="t" style="left:0px;top:471.59999999999997px;font-size:11px;line-height:13px;color:#0808f0;width:47px;text-align:right;letter-spacing:-.3px;">-30.74</span>
<span class="t" style="left:40px;top:471.59999999999997px;font-size:11px;line-height:13px;color:#000;width:42px;text-align:right;letter-spacing:-.3px;">112.1</span>
<span class="t" style="left:0px;top:489.87999999999994px;font-size:11px;line-height:13px;color:#0808f0;width:47px;text-align:right;letter-spacing:-.3px;">-124.6</span>
<span class="t" style="left:40px;top:489.87999999999994px;font-size:11px;line-height:13px;color:#000;width:42px;text-align:right;letter-spacing:-.3px;">88.64</span>
<span class="t" style="left:0px;top:508.1599999999999px;font-size:11px;line-height:13px;color:#0808f0;width:47px;text-align:right;letter-spacing:-.3px;">-218.4</span>
<span class="t" style="left:40px;top:508.1599999999999px;font-size:11px;line-height:13px;color:#000;width:42px;text-align:right;letter-spacing:-.3px;">65.18</span>
<span class="t" style="left:0px;top:526.44px;font-size:11px;line-height:13px;color:#0808f0;width:47px;text-align:right;letter-spacing:-.3px;">-312.3</span>
<span class="t" style="left:40px;top:526.44px;font-size:11px;line-height:13px;color:#000;width:42px;text-align:right;letter-spacing:-.3px;">41.72</span>
<span class="t" style="left:0px;top:544.72px;font-size:11px;line-height:13px;color:#0808f0;width:47px;text-align:right;letter-spacing:-.3px;">-406.1</span>
<span class="t" style="left:0px;top:563.0px;font-size:11px;line-height:13px;color:#0808f0;width:47px;text-align:right;letter-spacing:-.3px;">-500.0</span>
<span class="t" style="left:40px;top:560.0px;font-size:11px;line-height:13px;color:#000;width:42px;text-align:right;letter-spacing:-.3px;">0.0</span>
<div style="left:82px;top:569px;width:7px;height:7px;background:#fff;border:1px solid #000;"></div>
<span class="t" style="left:1191px;top:381px;font-size:11px;line-height:13px;color:#10a050;letter-spacing:-.3px;">438.5</span>
<div style="left:1216px;top:384px;width:7px;height:7px;background:#10a050;border:1px solid #111;"></div>
<span class="t" style="left:1191.5px;top:398px;font-size:11px;line-height:13px;color:#10a050;">mA</span>
<span class="t" style="left:1191px;top:435.03999999999996px;font-size:11px;line-height:13px;color:#10a050;letter-spacing:-.3px;">157.0</span>
<span class="t" style="left:1191px;top:453.32px;font-size:11px;line-height:13px;color:#10a050;letter-spacing:-.3px;">63.11</span>
<span class="t" style="left:1191px;top:471.59999999999997px;font-size:11px;line-height:13px;color:#10a050;letter-spacing:-.3px;">-30.74</span>
<span class="t" style="left:1191px;top:489.87999999999994px;font-size:11px;line-height:13px;color:#10a050;letter-spacing:-.3px;">-124.6</span>
<span class="t" style="left:1191px;top:508.1599999999999px;font-size:11px;line-height:13px;color:#10a050;letter-spacing:-.3px;">-218.4</span>
<span class="t" style="left:1191px;top:526.44px;font-size:11px;line-height:13px;color:#10a050;letter-spacing:-.3px;">-312.3</span>
<span class="t" style="left:1191px;top:544.72px;font-size:11px;line-height:13px;color:#10a050;letter-spacing:-.3px;">-406.1</span>
<span class="t" style="left:1191px;top:563.0px;font-size:11px;line-height:13px;color:#10a050;letter-spacing:-.3px;">-500.0</span>
<span class="t" style="left:315.4px;top:577px;font-size:11px;line-height:13px;color:#222;width:50px;text-align:center;letter-spacing:-.3px;">-1030.0</span>
<span class="t" style="left:457.6px;top:577px;font-size:11px;line-height:13px;color:#222;width:50px;text-align:center;letter-spacing:-.3px;">-1020.0</span>
<span class="t" style="left:599.8px;top:577px;font-size:11px;line-height:13px;color:#222;width:50px;text-align:center;letter-spacing:-.3px;">-1010.0</span>
<span class="t" style="left:742px;top:577px;font-size:11px;line-height:13px;color:#222;width:50px;text-align:center;letter-spacing:-.3px;">-1000.0</span>
<span class="t" style="left:884.2px;top:577px;font-size:11px;line-height:13px;color:#222;width:50px;text-align:center;letter-spacing:-.3px;">-990.0</span>
<span class="t" style="left:1169px;top:577px;font-size:11px;line-height:13px;color:#222;width:50px;text-align:center;letter-spacing:-.3px;">-970.0</span>
<div style="left:16px;top:589px;width:32px;height:12px;background:#8080ff;"></div>
<span class="t" style="left:16px;top:589px;font-size:10px;line-height:12px;color:#fff;width:32px;text-align:center;line-height:12px;">x1.0</span>
<div style="left:51px;top:589px;width:32px;height:12px;background:#808080;"></div>
<span class="t" style="left:51px;top:589px;font-size:10px;line-height:12px;color:#fff;width:32px;text-align:center;line-height:12px;">x1.0</span>
<div style="left:1189px;top:589px;width:32px;height:12px;background:#7dd0a5;"></div>
<span class="t" style="left:1189px;top:589px;font-size:10px;line-height:12px;color:#fff;width:32px;text-align:center;line-height:12px;">x1.0</span>
<span class="t" style="left:87px;top:592px;font-size:11px;line-height:13px;color:#222;">ms</span>
<span class="t" style="left:117px;top:592px;font-size:11px;line-height:13px;color:#222;letter-spacing:-.3px;">-1.0s</span>
<div style="left:15px;top:607px;width:1208px;height:16px;background:linear-gradient(#ebe6da,#f6f3ec 45%,#fdfcfa);"></div>
<div style="left:1223px;top:382px;width:16px;height:225px;background:linear-gradient(90deg,#e9e4d8,#f6f3ec 45%,#fbfaf7 60%,#efebe2);"></div>
<div style="left:1223px;top:382px;width:16px;height:16px;border:1px solid #8d7767;border-radius:3px;background:linear-gradient(#fbfaf7,#ece7db);box-shadow:inset 0 0 0 1px rgba(255,255,255,.6);"><svg style="left:2.5px;top:3.5px" width="9" height="7" viewBox="0 0 9 7"><path d="M1 5.500l3.500-3.500L8 5.500" fill="none" stroke="#6a594e" stroke-width="1.250"/></svg></div>
<div style="left:1223px;top:591px;width:16px;height:16px;border:1px solid #8d7767;border-radius:3px;background:linear-gradient(#fbfaf7,#ece7db);box-shadow:inset 0 0 0 1px rgba(255,255,255,.6);"><svg style="left:2.5px;top:3.5px" width="9" height="7" viewBox="0 0 9 7"><path d="M1 1.500l3.500 3.500L8 1.500" fill="none" stroke="#6a594e" stroke-width="1.250"/></svg></div>
<div style="left:1223px;top:411px;width:16px;height:178px;border:1px solid #8d7767;border-radius:3px;background:linear-gradient(90deg,#fbfaf7,#ece7db);box-shadow:inset 0 0 0 1px rgba(255,255,255,.6);"><div style="left:3px;top:84px;width:8px;height:1px;background:#6a594e;box-shadow:0 2px 0 #6a594e,0 4px 0 #6a594e"></div></div>
<div style="left:15px;top:607px;width:16px;height:16px;border:1px solid #8d7767;border-radius:3px;background:linear-gradient(#fbfaf7,#ece7db);box-shadow:inset 0 0 0 1px rgba(255,255,255,.6);"><svg style="left:3.5px;top:2.5px" width="7" height="9" viewBox="0 0 7 9"><path d="M5.500 1L2 4.500 5.500 8" fill="none" stroke="#6a594e" stroke-width="1.250"/></svg></div>
<div style="left:32px;top:607px;width:20px;height:16px;border:1px solid #8d7767;border-radius:3px;background:linear-gradient(#fbfaf7,#ece7db);box-shadow:inset 0 0 0 1px rgba(255,255,255,.6);"><div style="left:6px;top:3px;width:1px;height:8px;background:#6a594e;box-shadow:2px 0 0 #6a594e,4px 0 0 #6a594e"></div></div>
<div style="left:1207px;top:607px;width:16px;height:16px;border:1px solid #8d7767;border-radius:3px;background:linear-gradient(#fbfaf7,#ece7db);box-shadow:inset 0 0 0 1px rgba(255,255,255,.6);"><svg style="left:3.5px;top:2.5px" width="7" height="9" viewBox="0 0 7 9"><path d="M1.500 1L5 4.500 1.500 8" fill="none" stroke="#6a594e" stroke-width="1.250"/></svg></div>
<div style="left:1001px;top:477px;width:162px;height:130px;background:#fff;border:1px solid #9c9c9c;box-shadow:inset 0 0 0 1px #fff,inset 0 0 0 2px #a8a8a8;"></div>
<div style="left:1003px;top:479px;width:158px;height:13px;background:#9f9f9f;"></div>
<span class="t" style="left:1005px;top:479.2px;font-size:9.5px;line-height:11.5px;color:#fff;font-weight:bold;line-height:13px;letter-spacing:0px;">Zoom Overview</span>
<div style="left:1140px;top:487px;width:4px;height:2px;background:#fff;"></div>
<svg style="left:1151px;top:481px" width="8" height="8" viewBox="0 0 8 8"><path d="M1 1l6 6M7 1L1 7" stroke="#fff" stroke-width="1.600"/></svg>
<svg style="left:1003px;top:493px" width="158" height="112" viewBox="1003 493 158 112"><path d="M1010 497.500H1154.500M1010 507.500H1154.500M1082.500 497V514M1154 497V514M1014 598.500H1154.500" fill="none" stroke="#aed9e8" stroke-dasharray="3 3" stroke-width="1" shape-rendering="crispEdges"/><rect x="1010" y="514" width="145" height="68.500" fill="#0000f6"/><rect x="1010" y="582" width="145" height="15" fill="#000"/><path d="M1024.5 514v5M1041.5 514v5M1061.5 514v5M1078.5 514v5M1095.5 514v5M1115.5 514v5M1132.5 514v5M1012.5 514v1M1017.5 514v1M1020.5 514v1M1024.5 514v1M1029.5 514v1M1033.5 514v1M1035.5 514v1M1039.5 514v1M1045.5 514v1M1048.5 514v1M1053.5 514v1M1057.5 514v1M1059.5 514v1M1063.5 514v1M1068.5 514v1M1072.5 514v1M1075.5 514v1M1079.5 514v1M1085.5 514v1M1089.5 514v1M1093.5 514v1M1095.5 514v1M1101.5 514v1M1104.5 514v1M1108.5 514v1M1113.5 514v1M1117.5 514v1M1121.5 514v1M1125.5 514v1M1127.5 514v1M1133.5 514v1M1135.5 514v1M1141.5 514v1M1143.5 514v1M1147.5 514v1M1151.5 514v1" stroke="#fff" stroke-width="1" shape-rendering="crispEdges"/><path d="M1039 582v1.500M1063 582v1.500M1088 582v1.500M1091.500 583v1.500M1075.500 513v1.500" stroke="#10a050" stroke-width="1"/><rect x="1009.500" y="503.500" width="3" height="95" fill="#fff" fill-opacity=".12" stroke="#8a8a8a" stroke-width="1"/><path d="M1004.500 551.500h4M1005.500 549v5M1014 551.500h4M1017.500 549v5" stroke="#8a8a8a" stroke-width="1" fill="none" shape-rendering="crispEdges"/><path d="M1079.800 548.100l2.300-2.300 2.300 2.300-2.300 2.300z" fill="#f8f000"/></svg>
<div style="left:15px;top:626px;width:1224px;height:14px;background:#9f9f9f;"></div>
<div style="left:15px;top:626px;width:15px;height:83px;background:#9f9f9f;"></div>
<span class="t" style="left:34px;top:628px;font-size:10px;line-height:12px;color:#fff;line-height:12px;">Channel</span>
<div style="left:93px;top:627px;width:1px;height:13px;background:#e8e8e8;"></div>
<span class="t" style="left:98.5px;top:628px;font-size:10px;line-height:12px;color:#fff;line-height:12px;">Name</span>
<div style="left:162px;top:627px;width:1px;height:13px;background:#e8e8e8;"></div>
<span class="t" style="left:167.5px;top:628px;font-size:10px;line-height:12px;color:#fff;line-height:12px;">Value</span>
<div style="left:232px;top:627px;width:1px;height:13px;background:#e8e8e8;"></div>
<span class="t" style="left:237.5px;top:628px;font-size:10px;line-height:12px;color:#fff;line-height:12px;">Min</span>
<div style="left:296px;top:627px;width:1px;height:13px;background:#e8e8e8;"></div>
<span class="t" style="left:301.5px;top:628px;font-size:10px;line-height:12px;color:#fff;line-height:12px;">Max</span>
<div style="left:366px;top:627px;width:1px;height:13px;background:#e8e8e8;"></div>
<span class="t" style="left:371.5px;top:628px;font-size:10px;line-height:12px;color:#fff;line-height:12px;">Average</span>
<div style="left:436px;top:627px;width:1px;height:13px;background:#e8e8e8;"></div>
<span class="t" style="left:441.5px;top:628px;font-size:10px;line-height:12px;color:#fff;line-height:12px;">&#963;</span>
<div style="left:510px;top:627px;width:1px;height:13px;background:#e8e8e8;"></div>
<span class="t" style="left:515.5px;top:628px;font-size:10px;line-height:12px;color:#fff;line-height:12px;">Capture Count</span>
<div style="left:602px;top:627px;width:1px;height:13px;background:#e8e8e8;"></div>
<span class="t" style="left:607.5px;top:628px;font-size:10px;line-height:12px;color:#fff;line-height:12px;">Span</span>
<div style="left:1228px;top:636px;width:4px;height:2px;background:#fff;"></div>
<div style="left:30px;top:640px;width:1209px;height:23px;background:#fff;"></div>
<div style="left:19px;top:648px;width:6px;height:6px;background:#0808f0;border:1px solid #1a1a1a;"></div>
<span class="t cell" style="left:35px;top:644px;font-size:14px;line-height:16px;color:#000;letter-spacing:-0.2px;">A</span>
<div style="left:93px;top:640px;width:1px;height:23px;background:#9a9a9a;"></div>
<span class="t cell" style="left:98px;top:644px;font-size:14px;line-height:16px;color:#000;letter-spacing:-0.7px;">True RMS</span>
<div style="left:162px;top:640px;width:1px;height:23px;background:#9a9a9a;"></div>
<span class="t cell" style="left:167px;top:644px;font-size:14px;line-height:16px;color:#000;letter-spacing:-0.2px;">236.3 V</span>
<div style="left:232px;top:640px;width:1px;height:23px;background:#9a9a9a;"></div>
<span class="t cell" style="left:237px;top:644px;font-size:14px;line-height:16px;color:#000;letter-spacing:-0.2px;">235.4 V</span>
<div style="left:296px;top:640px;width:1px;height:23px;background:#9a9a9a;"></div>
<span class="t cell" style="left:301px;top:644px;font-size:14px;line-height:16px;color:#000;letter-spacing:-0.2px;">236.3 V</span>
<div style="left:366px;top:640px;width:1px;height:23px;background:#9a9a9a;"></div>
<span class="t cell" style="left:371px;top:644px;font-size:14px;line-height:16px;color:#000;letter-spacing:-0.2px;">235.8 V</span>
<div style="left:436px;top:640px;width:1px;height:23px;background:#9a9a9a;"></div>
<span class="t cell" style="left:441px;top:644px;font-size:14px;line-height:16px;color:#000;letter-spacing:-0.2px;">264 mV</span>
<div style="left:510px;top:640px;width:1px;height:23px;background:#9a9a9a;"></div>
<span class="t cell" style="left:515px;top:644px;font-size:14px;line-height:16px;color:#000;letter-spacing:-0.2px;">20</span>
<div style="left:602px;top:640px;width:1px;height:23px;background:#9a9a9a;"></div>
<span class="t cell" style="left:607px;top:644px;font-size:14px;line-height:16px;color:#000;letter-spacing:-0.2px;">Whole trace</span>
<div style="left:30px;top:663px;width:1209px;height:23px;background:#fff;"></div>
<div style="left:30px;top:663px;width:1209px;height:1px;background:#a9a9a9;"></div>
<div style="left:19px;top:671px;width:6px;height:6px;background:#10a050;border:1px solid #1a1a1a;"></div>
<span class="t cell" style="left:35px;top:667px;font-size:14px;line-height:16px;color:#000;letter-spacing:-0.2px;">C</span>
<div style="left:93px;top:663px;width:1px;height:23px;background:#9a9a9a;"></div>
<span class="t cell" style="left:98px;top:667px;font-size:14px;line-height:16px;color:#000;letter-spacing:-0.7px;">True RMS</span>
<div style="left:162px;top:663px;width:1px;height:23px;background:#9a9a9a;"></div>
<span class="t cell" style="left:167px;top:667px;font-size:14px;line-height:16px;color:#000;letter-spacing:-0.2px;">77.36 mA</span>
<div style="left:232px;top:663px;width:1px;height:23px;background:#9a9a9a;"></div>
<span class="t cell" style="left:237px;top:667px;font-size:14px;line-height:16px;color:#000;letter-spacing:-0.2px;">75.46 ...</span>
<div style="left:296px;top:663px;width:1px;height:23px;background:#9a9a9a;"></div>
<span class="t cell" style="left:301px;top:667px;font-size:14px;line-height:16px;color:#000;letter-spacing:-0.2px;">79.77 mA</span>
<div style="left:366px;top:663px;width:1px;height:23px;background:#9a9a9a;"></div>
<span class="t cell" style="left:371px;top:667px;font-size:14px;line-height:16px;color:#000;letter-spacing:-0.2px;">76.92 mA</span>
<div style="left:436px;top:663px;width:1px;height:23px;background:#9a9a9a;"></div>
<span class="t cell" style="left:441px;top:667px;font-size:14px;line-height:16px;color:#000;letter-spacing:-0.2px;">956 &#181;A</span>
<div style="left:510px;top:663px;width:1px;height:23px;background:#9a9a9a;"></div>
<span class="t cell" style="left:515px;top:667px;font-size:14px;line-height:16px;color:#000;letter-spacing:-0.2px;">20</span>
<div style="left:602px;top:663px;width:1px;height:23px;background:#9a9a9a;"></div>
<span class="t cell" style="left:607px;top:667px;font-size:14px;line-height:16px;color:#000;letter-spacing:-0.2px;">Whole trace</span>
<div style="left:30px;top:686px;width:1209px;height:23px;background:#78a2cc;"></div>
<div style="left:19px;top:694px;width:6px;height:6px;background:#000;border:1px solid #1a1a1a;box-shadow:0 0 0 1px #b8b8b8;"></div>
<span class="t cell" style="left:35px;top:690px;font-size:14px;line-height:16px;color:#eef3fa;letter-spacing:-0.45px;">Power</span>
<div style="left:93px;top:686px;width:1px;height:23px;background:#8e9fb4;"></div>
<span class="t cell" style="left:98px;top:690px;font-size:14px;line-height:16px;color:#eef3fa;letter-spacing:-0.7px;">AC RMS</span>
<div style="left:162px;top:686px;width:1px;height:23px;background:#8e9fb4;"></div>
<span class="t cell" style="left:167px;top:690px;font-size:14px;line-height:16px;color:#eef3fa;letter-spacing:-0.2px;">21.08 W</span>
<div style="left:232px;top:686px;width:1px;height:23px;background:#8e9fb4;"></div>
<span class="t cell" style="left:237px;top:690px;font-size:14px;line-height:16px;color:#eef3fa;letter-spacing:-0.2px;">20.39 W</span>
<div style="left:296px;top:686px;width:1px;height:23px;background:#8e9fb4;"></div>
<span class="t cell" style="left:301px;top:690px;font-size:14px;line-height:16px;color:#eef3fa;letter-spacing:-0.2px;">21.11 W</span>
<div style="left:366px;top:686px;width:1px;height:23px;background:#8e9fb4;"></div>
<span class="t cell" style="left:371px;top:690px;font-size:14px;line-height:16px;color:#eef3fa;letter-spacing:-0.2px;">20.85 W</span>
<div style="left:436px;top:686px;width:1px;height:23px;background:#8e9fb4;"></div>
<span class="t cell" style="left:441px;top:690px;font-size:14px;line-height:16px;color:#eef3fa;letter-spacing:-0.2px;">237.7 mW</span>
<div style="left:510px;top:686px;width:1px;height:23px;background:#8e9fb4;"></div>
<span class="t cell" style="left:515px;top:690px;font-size:14px;line-height:16px;color:#eef3fa;letter-spacing:-0.2px;">17</span>
<div style="left:602px;top:686px;width:1px;height:23px;background:#8e9fb4;"></div>
<span class="t cell" style="left:607px;top:690px;font-size:14px;line-height:16px;color:#eef3fa;letter-spacing:-0.2px;">Whole trace</span>
<div style="left:8px;top:716px;width:1238px;height:26px;background:linear-gradient(#f8f6f1,#eee9df);border:1px solid #8d7767;"></div>
<span class="t" style="left:18px;top:722px;font-size:12px;line-height:14px;color:#000;">Running</span>
<div class="hl" style="left:70px;top:718px;width:23px;height:22px;"></div>
<svg style="left:73px;top:720px" width="18" height="18" viewBox="0 0 18 18">
<circle cx="9" cy="9" r="7.500" fill="#4aa53a" stroke="#2a6a20" stroke-width="1.200"/>
<circle cx="9" cy="9" r="5.800" fill="none" stroke="#9bd88c" stroke-width=".8"/>
<path d="M4.500 7h4.500V4.300L14 9l-5 4.700V11H4.500z" fill="#fff" stroke="#333" stroke-width=".8"/></svg>
<svg style="left:94px;top:720px" width="18" height="18" viewBox="0 0 18 18">
<circle cx="9" cy="9" r="7.800" fill="#e8291c" stroke="#b01a10" stroke-width=".8"/>
<path d="M3 6c2-4 10-4 12 0" fill="none" stroke="#f9a49c" stroke-width="1.500" opacity=".8"/>
<rect x="3.500" y="7.500" width="11" height="3" fill="#fff"/></svg>
<div class="sep" style="left:116px;top:719px;width:1px;height:20px;"></div>
<span class="t" style="left:122px;top:722px;font-size:12px;line-height:14px;color:#000;">Trigger</span>
<div class="cb" style="left:166px;top:718px;width:75px;height:20px;"></div>
<span class="t" style="left:170px;top:721.25px;font-size:11.5px;line-height:13.5px;color:#000;letter-spacing:-.1px;">Repeat</span>
<div class="btn" style="left:223px;top:720px;width:16px;height:16px;"><svg style="left:2px;top:4px" width="9" height="6" viewBox="0 0 9 6"><path d="M1 1l3.5 3.5L8 1" fill="none" stroke="#6a594e" stroke-width="1.15"/></svg></div>
<svg style="left:240px;top:714px" width="30" height="28" viewBox="240 714 30 28">
<rect x="252" y="722" width="7" height="14" fill="#bcd0f4"/>
<path d="M246 732.500H249.500V725.500H255.500V732.500H262" fill="none" stroke="#000" stroke-width="1"/>
<rect x="254" y="728" width="3" height="3" fill="#00e000"/>
<path d="M256.500 725l4-3.600" stroke="#000" stroke-width="1.600"/><path d="M262.300 719.800v5l-5-5z" fill="#000"/></svg>
<div class="sep" style="left:267px;top:719px;width:1px;height:20px;"></div>
<div class="cb" style="left:275px;top:718px;width:75px;height:20px;"></div>
<span class="t" style="left:279px;top:721.25px;font-size:11.5px;line-height:13.5px;color:#000;letter-spacing:-.1px;">A</span>
<div class="btn" style="left:332px;top:720px;width:16px;height:16px;"><svg style="left:2px;top:4px" width="9" height="6" viewBox="0 0 9 6"><path d="M1 1l3.5 3.5L8 1" fill="none" stroke="#6a594e" stroke-width="1.15"/></svg></div>
<div class="sep" style="left:354px;top:719px;width:1px;height:20px;"></div>
<div class="hl" style="left:358px;top:718px;width:22px;height:21px;"></div>
<svg style="left:356px;top:714px" width="46" height="28" viewBox="356 714 46 28">
<path d="M368.500 722.500v11.500M366.800 725.500h3.400M366.800 731.500h3.400M367.300 724.500l1.200 1.500 1.200-1.500M367.300 732.500l1.200-1.500 1.200 1.500" stroke="#0000f0" stroke-width="1.100" fill="none"/>
<path d="M362 733.500h1.600L373.400 723.500h2.600" fill="none" stroke="#000" stroke-width="1"/>
<path d="M391.500 722.500v11.500M389.800 725.500h3.400M389.800 731.500h3.400M390.300 724.500l1.200 1.500 1.200-1.500M390.300 732.500l1.200-1.500 1.200 1.500" stroke="#0000f0" stroke-width="1.100" fill="none"/>
<path d="M384 723.500h2.600L396.200 733.500h1.600" fill="none" stroke="#000" stroke-width="1"/>
</svg>
<div class="sep" style="left:404px;top:719px;width:1px;height:20px;"></div>
<div class="cb" style="left:411px;top:718px;width:77px;height:20px;"></div>
<span class="t" style="left:416px;top:721.3px;font-size:11px;line-height:13px;color:#000;letter-spacing:-.1px;">129.7 mV</span>
<div class="btn" style="left:471px;top:720px;width:15px;height:16px;"><svg style="left:3px;top:0px" width="7" height="14" viewBox="0 0 7 14"><path d="M1.200 4.400L3.500 2.200 5.800 4.400M1.200 9.300L3.500 11.500 5.800 9.300" fill="none" stroke="#6a594e" stroke-width="1.300"/></svg><div style="left:0;top:7px;width:13px;height:1px;background:#9d8a7c"></div></div>
<div class="sep" style="left:492px;top:719px;width:1px;height:20px;"></div>
<div class="cb" style="left:498px;top:718px;width:76px;height:20px;"></div>
<span class="t" style="left:504px;top:721.3px;font-size:11px;line-height:13px;color:#000;letter-spacing:-.1px;">50 %</span>
<div class="btn" style="left:557px;top:720px;width:15px;height:16px;"><svg style="left:3px;top:0px" width="7" height="14" viewBox="0 0 7 14"><path d="M1.200 4.400L3.500 2.200 5.800 4.400M1.200 9.300L3.500 11.500 5.800 9.300" fill="none" stroke="#6a594e" stroke-width="1.300"/></svg><div style="left:0;top:7px;width:13px;height:1px;background:#9d8a7c"></div></div>
<svg style="left:576px;top:714px" width="24" height="28" viewBox="576 714 24 28">
<path d="M581.500 722v4M581.500 723.600H591" stroke="#0000f0" stroke-width="1.300" fill="none"/><path d="M590 721.200l3.400 2.400-3.400 2.400z" fill="#0000f0"/>
<path d="M579.300 730.700C581 728.500 582.500 725.500 583.900 725.500 586 725.500 589.500 734.600 592 734.600 593 734.600 594 733.300 594.900 732.200" fill="none" stroke="#000" stroke-width="1.300"/>
<path d="M590.100 727.600l2.400-2.400 2.400 2.400-2.400 2.400z" fill="#f0f000" stroke="#000" stroke-width=".7"/></svg>
<div class="cb" style="left:601px;top:718px;width:76px;height:20px;background:#f6f4ef;"></div>
<span class="t" style="left:607px;top:721.3px;font-size:11px;line-height:13px;color:#c4c0d0;letter-spacing:-.1px;">0 s</span>
<div class="btn" style="left:660px;top:720px;width:15px;height:16px;opacity:.45;"><svg style="left:3px;top:0px" width="7" height="14" viewBox="0 0 7 14"><path d="M1.200 4.400L3.500 2.200 5.800 4.400M1.200 9.300L3.500 11.500 5.800 9.300" fill="none" stroke="#6a594e" stroke-width="1.300"/></svg><div style="left:0;top:7px;width:13px;height:1px;background:#9d8a7c"></div></div>
<div class="sep" style="left:681px;top:719px;width:1px;height:20px;"></div>
<span class="t" style="left:689px;top:722px;font-size:12px;line-height:14px;color:#000;">Measurements</span>
<svg style="left:774px;top:720px" width="15" height="15" viewBox="0 0 15 15">
<rect width="15" height="15" fill="#0a640a"/><rect width="14" height="14" fill="#7fdc7a"/>
<rect x="1.500" y="1.500" width="12.500" height="12.500" fill="#0e8a10"/><rect x="1.500" y="1.500" width="11.500" height="11.500" fill="#1fb41f"/><path d="M3.500 7.500h8M7.500 3.500v8" stroke="#fff" stroke-width="2.400"/></svg>
<svg style="left:796px;top:720px" width="15" height="15" viewBox="0 0 15 15">
<rect width="15" height="15" fill="#0a640a"/><rect width="14" height="14" fill="#7fdc7a"/>
<rect x="1.500" y="1.500" width="12.500" height="12.500" fill="#0e8a10"/><rect x="1.500" y="1.500" width="11.500" height="11.500" fill="#1fb41f"/><path d="M3.500 7.500h8" stroke="#fff" stroke-width="2.400"/></svg>
<svg style="left:818px;top:720px" width="15" height="15" viewBox="0 0 15 15">
<rect width="15" height="15" fill="#0a640a"/><rect width="14" height="14" fill="#7fdc7a"/>
<rect x="1.500" y="1.500" width="12.500" height="12.500" fill="#0e8a10"/><rect x="1.500" y="1.500" width="11.500" height="11.500" fill="#1fb41f"/><path d="M2.800 10.500h9.400L7.500 4.800z" fill="#fff"/></svg>
<div class="sep" style="left:839px;top:719px;width:1px;height:20px;"></div>
<span class="t" style="left:846px;top:722px;font-size:12px;line-height:14px;color:#000;letter-spacing:-.4px;">Rulers</span>
<svg style="left:885px;top:720px" width="15" height="15" viewBox="0 0 15 15">
<rect width="15" height="15" fill="#0a640a"/><rect width="14" height="14" fill="#7fdc7a"/>
<rect x="1.500" y="1.500" width="12.500" height="12.500" fill="#0e8a10"/><rect x="1.500" y="1.500" width="11.500" height="11.500" fill="#1fb41f"/><path d="M2.800 10.500h9.400L7.500 4.800z" fill="#fff"/></svg>
<span class="t" style="left:907px;top:722px;font-size:12px;line-height:14px;color:#000;">Notes</span>
<svg style="left:945px;top:720px" width="15" height="15" viewBox="0 0 15 15">
<rect width="15" height="15" fill="#0a640a"/><rect width="14" height="14" fill="#7fdc7a"/>
<rect x="1.500" y="1.500" width="12.500" height="12.500" fill="#0e8a10"/><rect x="1.500" y="1.500" width="11.500" height="11.500" fill="#1fb41f"/><path d="M2.800 10.500h9.400L7.500 4.800z" fill="#fff"/></svg>
<svg style="left:1104px;top:696px" width="150" height="54" viewBox="1104 696 150 54">
<path d="M1137 702c1.500 7 10 11.500 10 26a17.300 17.300 0 1 1-34.600 0C1112.400 716 1127 713 1137 702z" fill="#fff" opacity=".62"/>
<g fill="none" stroke="#cfcac0" stroke-width="1.100"><path d="M1120.300 726.500L1136 714M1137.300 729.800L1122 741.500"/><circle cx="1118.600" cy="728" r="2.300" fill="#f6f4ef"/><circle cx="1139" cy="728" r="2.300" fill="#f6f4ef"/></g>
<g transform="skewX(-10) translate(125.800 -.5)" fill="none" stroke-linecap="round" stroke-linejoin="round">
<path d="M1156.7 717.7h11v7h-11zM1156.7 721.2h11M1162.2 714.7v12.500q0 2 2 2h5M1174.7 716.2h10l-4 3.500M1172.7 722.2h15M1180.7 719.7v8q0 2-3 1.500M1191.7 719.2h13M1196.7 714.7l-5 13.500M1194.7 722.7h7l-7 6.500M1195.7 723.2l9 6M1201.7 714.7l2.500 2.500M1210.7 714.7v8l-3 6M1208.2 718.2l1.500 3M1213.2 718.2l-1.500 2.500M1210.7 722.7l3 5M1214.7 717.2h8M1218.7 714.7l-3 6h7M1214.2 724.2h9.500M1217.2 724.2l-3.500 5M1220.2 724.2v3.500q0 1.500 2 1.500h2M1225.7 718.2h14M1231.7 714.7l-6 14.500M1230.2 722.2h7.500l-8 7M1230.7 723.2l8.500 6" stroke="#b4b0a8" stroke-width="2" opacity=".8"/>
<path d="M1156 717h11v7h-11zM1156 720.5h11M1161.5 714v12.500q0 2 2 2h5M1174 715.5h10l-4 3.500M1172 721.5h15M1180 719v8q0 2-3 1.500M1191 718.5h13M1196 714l-5 13.500M1194 722h7l-7 6.500M1195 722.5l9 6M1201 714l2.500 2.500M1210 714v8l-3 6M1207.5 717.5l1.500 3M1212.5 717.5l-1.500 2.500M1210 722l3 5M1214 716.5h8M1218 714l-3 6h7M1213.5 723.5h9.500M1216.5 723.5l-3.500 5M1219.5 723.5v3.500q0 1.500 2 1.500h2M1225 717.5h14M1231 714l-6 14.500M1229.5 721.5h7.500l-8 7M1230 722.5l8.500 6" stroke="#fff" stroke-width="2"/></g>
<text x="1153.600" y="742.600" font-family="Liberation Sans" font-size="10.500" font-weight="bold" fill="#aaa59c" textLength="96.500" lengthAdjust="spacingAndGlyphs">www.elecfans.com</text>
<text x="1153" y="742" font-family="Liberation Sans" font-size="10.500" font-weight="bold" fill="#fff" textLength="96.500" lengthAdjust="spacingAndGlyphs">www.elecfans.com</text>
</svg>
</body></html>
